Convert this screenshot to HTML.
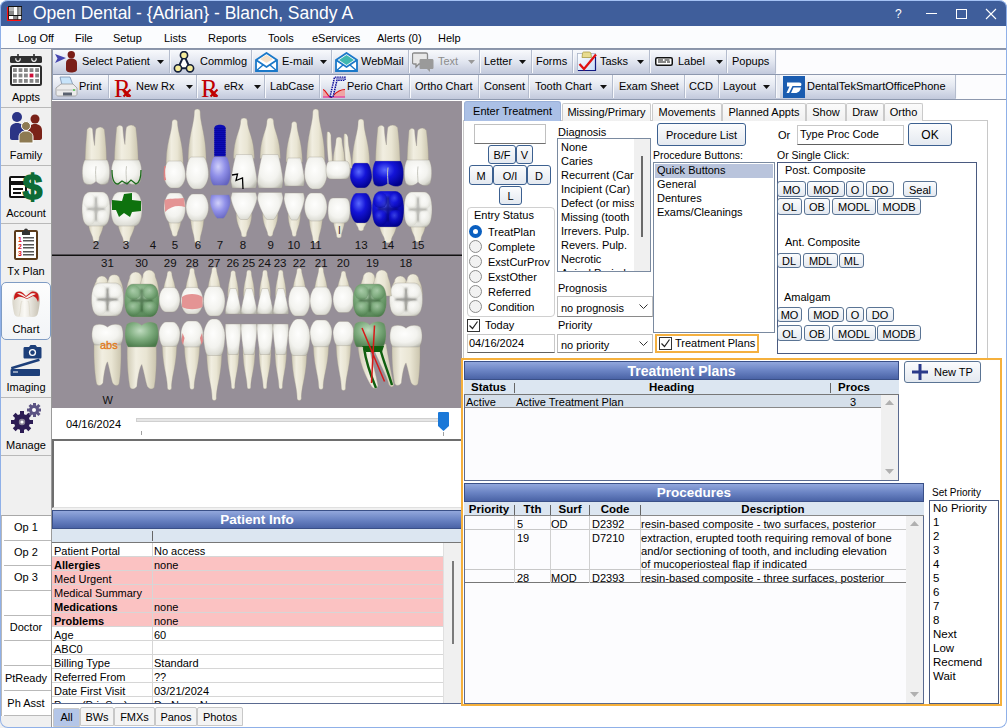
<!DOCTYPE html>
<html><head><meta charset="utf-8">
<style>
*{box-sizing:border-box;margin:0;padding:0}
html,body{width:1007px;height:728px;overflow:hidden;background:#fff}
body{position:relative;font-family:"Liberation Sans",sans-serif;font-size:11px;color:#000}
.a{position:absolute}
.t{position:absolute;white-space:nowrap;line-height:1}
#title{left:0;top:0;width:1007px;height:26px;background:#3f5e9b;border-top:1px solid #a4c2f4;border-radius:8px 8px 0 0}
#menu{left:0;top:26px;width:1007px;height:23px;background:#fbfcfe;border-bottom:1px solid #8a94a8}
.tb{height:25px;background:linear-gradient(#f8f9fc,#e4e8f1 45%,#c2c9dc);border-bottom:1px solid #8d98ae}
.sep{position:absolute;top:1px;width:1px;height:23px;background:#a9b1c4}
#side{left:0;top:49px;width:52px;height:679px;background:#f0f0f0;border-right:1px solid #9a9a9a}
.sb{position:absolute;left:1px;width:50px;height:58px;border-bottom:1px solid #b4b4b4;text-align:center}
.sbl{position:absolute;left:0;width:50px;top:41px;font-size:11px;text-align:center;line-height:12px}
#chart{left:52px;top:101px;width:410px;height:307px;background:#968f98}
.btn{position:absolute;border:1px solid #3c6090;border-radius:3px;background:linear-gradient(#fbfcfd,#e4e9f0);text-align:center;line-height:16px}
.hdr{position:absolute;height:19px;background:linear-gradient(#92a7dc,#6b84c4 50%,#4a63a6);color:#fff;font-weight:bold;font-size:13.5px;text-align:center;line-height:18px;border:1px solid #3a5088}
.colh{position:absolute;height:14px;background:#dce6f1;border-bottom:1px solid #777}
</style></head><body>

<!-- TITLE BAR -->
<div id="title" class="a"></div>


<svg class="a" style="left:7px;top:6px" width="15" height="15" viewBox="0 0 15 15">
<rect x="1" y="0" width="14" height="14" fill="#111"/>
<rect x="2" y="1" width="4.5" height="4" fill="#b8b8b8"/><rect x="6.5" y="1" width="4" height="8" fill="#fff"/><rect x="2" y="5" width="4.5" height="4" fill="#8a8a8a"/>
<rect x="11.2" y="1" width="3" height="8" fill="#a8a8a8"/>
<rect x="2" y="10" width="4.5" height="3.2" fill="#fff"/><rect x="6.5" y="10" width="4" height="3.2" fill="#8c8c8c"/><rect x="11.2" y="10" width="3" height="3.2" fill="#fff"/>
<rect x="0" y="1" width="1.2" height="14" fill="#ff1010"/><rect x="0" y="13.8" width="14" height="1.2" fill="#ff1010"/>
</svg>
<div class="t" style="left:33px;top:5px;font-size:17.5px;color:#fff">Open Dental - {Adrian} - Blanch, Sandy A</div>
<div class="t" style="left:895px;top:8px;font-size:12px;color:#fff">?</div>
<div class="a" style="left:926px;top:13px;width:11px;height:1px;background:#fff"></div>
<div class="a" style="left:956px;top:9px;width:11px;height:10px;border:1px solid #fff"></div>
<svg class="a" style="left:985px;top:8px" width="12" height="12" viewBox="0 0 12 12"><path d="M1 1L11 11M11 1L1 11" stroke="#fff" stroke-width="1.1"/></svg>

<!-- MENU -->
<div id="menu" class="a"></div>
<div class="t" style="left:18px;top:33px;font-size:11px">Log Off</div>
<div class="t" style="left:75px;top:33px;font-size:11px">File</div>
<div class="t" style="left:113px;top:33px;font-size:11px">Setup</div>
<div class="t" style="left:164px;top:33px;font-size:11px">Lists</div>
<div class="t" style="left:208px;top:33px;font-size:11px">Reports</div>
<div class="t" style="left:268px;top:33px;font-size:11px">Tools</div>
<div class="t" style="left:312px;top:33px;font-size:11px">eServices</div>
<div class="t" style="left:377px;top:33px;font-size:11px">Alerts (0)</div>
<div class="t" style="left:438px;top:33px;font-size:11px">Help</div>

<!-- SIDEBAR -->
<div id="side" class="a"></div>
<div class="a" style="left:1px;top:107px;width:50px;height:1px;background:#b9b9b9"></div>
<div class="a" style="left:1px;top:165px;width:50px;height:1px;background:#b9b9b9"></div>
<div class="a" style="left:1px;top:223px;width:50px;height:1px;background:#b9b9b9"></div>
<div class="a" style="left:1px;top:397px;width:50px;height:1px;background:#b9b9b9"></div>
<div class="a" style="left:1px;top:455px;width:50px;height:1px;background:#b9b9b9"></div>
<div class="a" style="left:1px;top:282px;width:50px;height:58px;border:1px solid #7f9cc4;border-radius:5px;background:linear-gradient(#fdfdfd,#f2f4f7)"></div>
<!-- Appts calendar -->
<svg class="a" style="left:10px;top:54px" width="32" height="32" viewBox="0 0 32 32">
<rect x="0" y="2" width="32" height="7" rx="1.5" fill="#2e2e2e"/>
<path d="M8 0v4.5M24 0v4.5" stroke="#2e2e2e" stroke-width="1.6"/>
<path d="M6 4.2a2.2 2.2 0 1 0 4 0M22 4.2a2.2 2.2 0 1 0 4 0" fill="none" stroke="#eee" stroke-width="1.2"/>
<rect x="1" y="12" width="30" height="19" rx="1.5" fill="#fff" stroke="#2e2e2e" stroke-width="2"/>
<rect x="3" y="14.2" width="3.8" height="3.8" fill="#868686"/><rect x="8.6" y="14.2" width="3.8" height="3.8" fill="#868686"/><rect x="14" y="14.2" width="3.8" height="3.8" fill="#868686"/><rect x="19.6" y="14.2" width="3.8" height="3.8" fill="#868686"/><rect x="25.2" y="14.2" width="3.8" height="3.8" fill="#868686"/><rect x="3" y="19.6" width="3.8" height="3.8" fill="#868686"/><rect x="8.6" y="19.6" width="3.8" height="3.8" fill="#868686"/><rect x="14" y="19.6" width="3.8" height="3.8" fill="#868686"/><rect x="19.6" y="19.6" width="3.8" height="3.8" fill="#d0103a"/><rect x="25.2" y="19.6" width="3.8" height="3.8" fill="#868686"/><rect x="3" y="25" width="3.8" height="3.8" fill="#868686"/><rect x="8.6" y="25" width="3.8" height="3.8" fill="#868686"/><rect x="14" y="25" width="3.8" height="3.8" fill="#868686"/><rect x="19.6" y="25" width="3.8" height="3.8" fill="#868686"/><rect x="25.2" y="25" width="3.8" height="3.8" fill="#868686"/>
</svg>
<div class="t" style="left:0;width:52px;text-align:center;top:92px;font-size:11px">Appts</div>
<!-- Family -->
<svg class="a" style="left:10px;top:112px" width="32" height="32" viewBox="0 0 32 32">
<circle cx="7" cy="5" r="5" fill="#2b3485"/><path d="M0 18c0-5 3-7 7-7s7 2 7 7v10H2c-1 0-2-1-2-2z" fill="#2b3485"/>
<circle cx="25" cy="7" r="4.5" fill="#7a2218"/><path d="M18 19c0-5 3-7 7-7s7 2 7 7v7c0 1-1 2-2 2h-12z" fill="#7a2218"/>
<circle cx="16" cy="14" r="4.5" fill="#8d7a52" stroke="#fff" stroke-width="1"/><path d="M9 25c0-4 3-6 7-6s7 2 7 6v6H9z" fill="#8d7a52" stroke="#fff" stroke-width="1"/>
</svg>
<div class="t" style="left:0;width:52px;text-align:center;top:150px;font-size:11px">Family</div>
<!-- Account -->
<svg class="a" style="left:9px;top:170px" width="34" height="32" viewBox="0 0 34 32">
<rect x="1" y="7" width="16" height="20" rx="1" fill="#fff" stroke="#111" stroke-width="2"/>
<rect x="1" y="11" width="16" height="4" fill="#111"/><rect x="4" y="18" width="10" height="2" fill="#111"/><rect x="4" y="22" width="8" height="2" fill="#111"/>
<text x="23.5" y="29" font-family="Liberation Sans" font-weight="bold" font-size="35" fill="#0d6b35" stroke="#0d6b35" stroke-width="1.6" text-anchor="middle">$</text>
</svg>
<div class="t" style="left:0;width:52px;text-align:center;top:208px;font-size:11px">Account</div>
<!-- Tx Plan -->
<svg class="a" style="left:14px;top:228px" width="24" height="32" viewBox="0 0 24 32">
<rect x="1" y="3" width="22" height="28" rx="1" fill="#fff" stroke="#5a3a1a" stroke-width="2"/>
<path d="M8 3h8v4H8z" fill="#333"/><circle cx="12" cy="2.5" r="2" fill="#333"/>
<g fill="#e01010" font-family="Liberation Sans" font-weight="bold" font-size="7"><text x="4" y="14">1</text><text x="4" y="21">2</text><text x="4" y="28">3</text></g>
<g fill="#555"><rect x="9" y="9" width="11" height="1.5"/><rect x="9" y="12" width="11" height="1.5"/><rect x="9" y="16" width="11" height="1.5"/><rect x="9" y="19" width="11" height="1.5"/><rect x="9" y="23" width="11" height="1.5"/><rect x="9" y="26" width="11" height="1.5"/></g>
</svg>
<div class="t" style="left:0;width:52px;text-align:center;top:266px;font-size:11px">Tx Plan</div>
<!-- Chart tooth -->
<svg class="a" style="left:11px;top:289px" width="30" height="29" viewBox="0 0 30 29">
<defs><linearGradient id="tg" x1="0" x2="1"><stop offset="0" stop-color="#d8d4c8"/><stop offset="0.45" stop-color="#fbfaf6"/><stop offset="1" stop-color="#c6c0b2"/></linearGradient></defs>
<path d="M3 5C5 1 10 1 13 3C16 1 22 0 26 3C30 7 29 13 28 19C27 24 27 28 22 28H8C3 28 3 24 2 19C1 13 1 9 3 5z" fill="url(#tg)"/>
<path d="M8 27C10 22 9 15 11 12M19 27C18 22 19 15 17 12" stroke="#e0dccf" stroke-width="1" fill="none"/>
<path d="M4 5C6 2 9 2 12 4L15 7L20 3C23 2 26 3 27 5C28 8 28 11 27 13C26 10 25 8 22 7L16 10C13 9 10 7 7 8C5 9 4 10 3 11C3 9 3 7 4 5z" fill="#c81818"/>
<path d="M6 4.5C8 3.5 10 4 12 5.5L15 8L20 4.5C22 4 24 4 25 5C23 6 21 6.5 16 9.5C13 8 10 6 6 4.5z" fill="#f4f0ec"/>
</svg>
<div class="t" style="left:0;width:52px;text-align:center;top:324px;font-size:11px">Chart</div>
<!-- Imaging -->
<svg class="a" style="left:10px;top:344px" width="32" height="33" viewBox="0 0 32 33">
<path d="M15 3h4l1.5-2h5L27 3h3c1 0 1.5.5 1.5 1.5V13c0 1-.5 1.5-1.5 1.5H15c-1 0-1.5-.5-1.5-1.5V4.5C13.5 3.5 14 3 15 3z" fill="#1d3f7a"/>
<circle cx="22.5" cy="8.5" r="3.6" fill="#fff"/><circle cx="22.5" cy="8.5" r="2.2" fill="#1d3f7a"/>
<path d="M1 23L29 14.5l.8 2.6L1.5 25.5z" fill="#1d3f7a"/>
<path d="M2 25h27c.5 0 1 .5 1 1v5c0 .5-.5 1-1 1H1.5c-.5 0-1-.5-1-1v-5c0-.5.5-1 1.5-1z" fill="#1d3f7a"/>
<path d="M3 28h5" stroke="#fff" stroke-width="1"/>
</svg>
<div class="t" style="left:0;width:52px;text-align:center;top:382px;font-size:11px">Imaging</div>
<!-- Manage -->
<svg class="a" style="left:10px;top:402px" width="32" height="32" viewBox="0 0 32 32">
<g fill="#2c1c54"><circle cx="12" cy="20" r="8"/>
<rect x="10" y="9" width="4" height="22"/><rect x="1" y="18" width="22" height="4"/>
<rect x="10" y="9" width="4" height="22" transform="rotate(45 12 20)"/><rect x="10" y="9" width="4" height="22" transform="rotate(-45 12 20)"/></g>
<circle cx="12" cy="20" r="3.2" fill="#8a8498"/><circle cx="12" cy="20" r="1.6" fill="#fff"/>
<g fill="#5c5484"><circle cx="24" cy="8" r="5"/>
<rect x="23" y="1" width="3" height="14"/><rect x="17" y="6.5" width="14" height="3"/>
<rect x="23" y="1" width="3" height="14" transform="rotate(45 24.5 8)"/><rect x="23" y="1" width="3" height="14" transform="rotate(-45 24.5 8)"/></g>
<circle cx="24" cy="8" r="2" fill="#fff"/>
</svg>
<div class="t" style="left:0;width:52px;text-align:center;top:440px;font-size:11px">Manage</div>
<!-- Op list -->
<div class="a" style="left:1px;top:515px;width:50px;height:201px;background:#fff;border-top:1px solid #a8a8a8;border-left:1px solid #b8b8b8"></div>
<div class="a" style="left:4px;top:540px;width:47px;height:1px;background:#b9b9b9"></div>
<div class="a" style="left:4px;top:565px;width:47px;height:1px;background:#b9b9b9"></div>
<div class="a" style="left:4px;top:590px;width:47px;height:1px;background:#b9b9b9"></div>
<div class="a" style="left:4px;top:615px;width:47px;height:1px;background:#b9b9b9"></div>
<div class="a" style="left:4px;top:640px;width:47px;height:1px;background:#b9b9b9"></div>
<div class="a" style="left:4px;top:665px;width:47px;height:1px;background:#b9b9b9"></div>
<div class="a" style="left:4px;top:690px;width:47px;height:1px;background:#b9b9b9"></div>
<div class="a" style="left:4px;top:715px;width:47px;height:1px;background:#b9b9b9"></div>
<div class="t" style="left:1px;width:50px;text-align:center;top:522px;font-size:11px">Op 1</div>
<div class="t" style="left:1px;width:50px;text-align:center;top:547px;font-size:11px">Op 2</div>
<div class="t" style="left:1px;width:50px;text-align:center;top:572px;font-size:11px">Op 3</div>
<div class="t" style="left:1px;width:50px;text-align:center;top:622px;font-size:11px">Doctor</div>
<div class="t" style="left:1px;width:50px;text-align:center;top:673px;font-size:11px">PtReady</div>
<div class="t" style="left:1px;width:50px;text-align:center;top:698px;font-size:11px">Ph Asst</div>

<!-- TOOLBAR -->
<div class="a tb" style="left:52px;top:49px;width:955px;border-top:1px solid #8d98ae;height:26px"></div>
<div class="a tb" style="left:52px;top:75px;width:955px;height:25px"></div>
<div class="a" style="left:776px;top:50px;width:231px;height:24px;background:#fcfcfe"></div>
<div class="a" style="left:956px;top:75px;width:51px;height:24px;background:#fcfcfe"></div>
<div class="a" style="left:52px;top:100px;width:955px;height:1px;background:#fff"></div>
<div class="a" style="left:52px;top:49px;width:1px;height:50px;background:#8d98ae"></div>
<!-- row1 -->
<svg class="a" style="left:55px;top:51px" width="23" height="22" viewBox="0 0 23 22">
<path d="M0 3L11 7L0 12L2.5 7.5z" fill="#4646b0"/><circle cx="16.3" cy="3.8" r="3.7" fill="#7a1e18"/><path d="M11 12c0-3 2-4.5 5.3-4.5s5.7 1.5 5.7 4.5v6.5c0 2-2.5 3-5.7 3s-5.3-1-5.3-3z" fill="#7a1e18"/></svg>
<div class="t" style="left:82px;top:56px">Select Patient</div><svg class="a" style="left:157px;top:60px" width="7" height="4"><path d="M0 0h7L3.5 4z" fill="#111"/></svg><div class="a" style="left:169px;top:50px;width:1px;height:23px;background:#b4bccd;box-shadow:1px 0 0 #f8f9fc"></div>
<svg class="a" style="left:173px;top:51px" width="22" height="22" viewBox="0 0 22 22">
<path d="M11 4.2L5 17.3h12z" fill="#fff" stroke="#15203a" stroke-width="2"/>
<circle cx="11" cy="4.2" r="3.6" fill="#f6ec9c" stroke="#15203a" stroke-width="1.6"/><circle cx="5" cy="17.3" r="3.6" fill="#f6ec9c" stroke="#15203a" stroke-width="1.6"/><circle cx="17" cy="17.3" r="3.6" fill="#f6ec9c" stroke="#15203a" stroke-width="1.6"/></svg>
<div class="t" style="left:200px;top:56px">Commlog</div><div class="a" style="left:251px;top:50px;width:1px;height:23px;background:#b4bccd;box-shadow:1px 0 0 #f8f9fc"></div>
<svg class="a" style="left:255px;top:52px" width="23" height="20" viewBox="0 0 23 20">
<path d="M1 8L11.5 1 22 8v11H1z" fill="#fff" stroke="#1a78c8" stroke-width="1.8"/><path d="M1 8l10.5 7L22 8" fill="none" stroke="#1a78c8" stroke-width="1.8"/><path d="M1 19l7-6M22 19l-7-6" stroke="#1a78c8" stroke-width="1.5"/><path d="M5 7l6.5-4 6.5 4-6.5 4z" fill="#f4e0c8"/></svg>
<div class="t" style="left:282px;top:56px">E-mail</div><svg class="a" style="left:320px;top:60px" width="7" height="4"><path d="M0 0h7L3.5 4z" fill="#111"/></svg><div class="a" style="left:331px;top:50px;width:1px;height:23px;background:#b4bccd;box-shadow:1px 0 0 #f8f9fc"></div>
<svg class="a" style="left:335px;top:52px" width="23" height="20" viewBox="0 0 23 20">
<path d="M1 8L11.5 1 22 8v11H1z" fill="#fff" stroke="#1a78c8" stroke-width="1.8"/><path d="M4 8l7.5-5 7.5 5-7.5 5z" fill="#40b8b0"/><path d="M1 8l10.5 7L22 8" fill="none" stroke="#1a78c8" stroke-width="1.8"/><path d="M1 19l7-6M22 19l-7-6" stroke="#1a78c8" stroke-width="1.5"/></svg>
<div class="t" style="left:361px;top:56px">WebMail</div><div class="a" style="left:408px;top:50px;width:1px;height:23px;background:#b4bccd;box-shadow:1px 0 0 #f8f9fc"></div>
<svg class="a" style="left:412px;top:52px" width="22" height="21" viewBox="0 0 22 21">
<path d="M2 1h12c1 0 1.5.5 1.5 1.5v8c0 1-.5 1.5-1.5 1.5H7l-3 3v-3H2c-1 0-1.5-.5-1.5-1.5v-8C.5 1.5 1 1 2 1z" fill="#e8e8e8" stroke="#8a8a8a" stroke-width="1.3"/>
<path d="M9 7h11c1 0 1.5.5 1.5 1.5v7c0 1-.5 1.5-1.5 1.5h-2v3l-3-3H9c-1 0-1.5-.5-1.5-1.5v-7C7.5 7.5 8 7 9 7z" fill="#9a9a9a"/></svg>
<div class="t" style="left:438px;top:56px;color:#8c8c8c">Text</div><svg class="a" style="left:468px;top:60px" width="7" height="4"><path d="M0 0h7L3.5 4z" fill="#999"/></svg><div class="a" style="left:479px;top:50px;width:1px;height:23px;background:#b4bccd;box-shadow:1px 0 0 #f8f9fc"></div>
<div class="t" style="left:484px;top:56px">Letter</div><svg class="a" style="left:519px;top:60px" width="7" height="4"><path d="M0 0h7L3.5 4z" fill="#111"/></svg><div class="a" style="left:531px;top:50px;width:1px;height:23px;background:#b4bccd;box-shadow:1px 0 0 #f8f9fc"></div>
<div class="t" style="left:536px;top:56px">Forms</div><div class="a" style="left:572px;top:50px;width:1px;height:23px;background:#b4bccd;box-shadow:1px 0 0 #f8f9fc"></div>
<svg class="a" style="left:577px;top:51px" width="21" height="22" viewBox="0 0 21 22">
<defs><linearGradient id="tkg" x1="0" y1="0" x2="1" y2="1"><stop offset="0" stop-color="#fff"/><stop offset="1" stop-color="#c8dcf8"/></linearGradient></defs>
<rect x="0.5" y="2.5" width="18" height="17" fill="url(#tkg)" stroke="#a8b4c8" stroke-width="0.8"/>
<path d="M18.5 6V19.5H1" fill="none" stroke="#101880" stroke-width="1.2"/>
<path d="M5.5 2.5C5.5 1 6.5 1 7.5 1H12C13 1 14 1.5 14 3L14.5 6.5H5z" fill="#e8dc90" stroke="#a09030" stroke-width="0.7"/>
<path d="M2.5 13L7 18L19 3.5" fill="none" stroke="#e01010" stroke-width="2.3"/>
</svg>
<div class="t" style="left:600px;top:56px">Tasks</div><svg class="a" style="left:637px;top:60px" width="7" height="4"><path d="M0 0h7L3.5 4z" fill="#111"/></svg><div class="a" style="left:649px;top:50px;width:1px;height:23px;background:#b4bccd;box-shadow:1px 0 0 #f8f9fc"></div>
<svg class="a" style="left:655px;top:57px" width="18" height="9" viewBox="0 0 18 9">
<rect x="0.75" y="0.75" width="16.5" height="7.5" rx="1.5" fill="#fff" stroke="#111" stroke-width="1.5"/><path d="M3 3h5M3 5h8M9.5 3h5M12 5h3" stroke="#111" stroke-width="1"/></svg>
<div class="t" style="left:678px;top:56px">Label</div><svg class="a" style="left:716px;top:60px" width="7" height="4"><path d="M0 0h7L3.5 4z" fill="#111"/></svg><div class="a" style="left:726px;top:50px;width:1px;height:23px;background:#b4bccd;box-shadow:1px 0 0 #f8f9fc"></div>
<div class="t" style="left:732px;top:56px">Popups</div><div class="a" style="left:775px;top:50px;width:1px;height:23px;background:#b4bccd;box-shadow:1px 0 0 #f8f9fc"></div>
<!-- row2 -->
<svg class="a" style="left:55px;top:76px" width="23" height="22" viewBox="0 0 23 22">
<path d="M5 1h10l3 8H7z" fill="#c8e4fa" stroke="#7890b0" stroke-width="0.8"/>
<path d="M1 12l5-4h12l4 4v6c0 1-1 2-2 2H3c-1 0-2-1-2-2z" fill="#ececec" stroke="#9a9a9a" stroke-width="0.8"/>
<path d="M2 13h19v2H2z" fill="#d4d4d4"/><rect x="8" y="16.5" width="9" height="3" fill="#5a6270"/><circle cx="19" cy="14" r="0.9" fill="#40c040"/></svg>
<div class="t" style="left:79px;top:81px">Print</div><div class="a" style="left:108px;top:75px;width:1px;height:23px;background:#b4bccd;box-shadow:1px 0 0 #f8f9fc"></div>
<div class="t" style="left:114px;top:76px;font-family:'Liberation Serif';font-size:25px;color:#c00000">R</div>
<svg class="a" style="left:122px;top:88px" width="10" height="10"><path d="M1.5 1.5l7 7M8.5 1.5l-7 7" stroke="#c00000" stroke-width="2"/></svg>
<div class="t" style="left:136px;top:81px">New Rx</div><svg class="a" style="left:186px;top:85px" width="7" height="4"><path d="M0 0h7L3.5 4z" fill="#111"/></svg><div class="a" style="left:196px;top:75px;width:1px;height:23px;background:#b4bccd;box-shadow:1px 0 0 #f8f9fc"></div>
<div class="t" style="left:201px;top:76px;font-family:'Liberation Serif';font-size:25px;color:#c00000">R</div>
<svg class="a" style="left:209px;top:88px" width="10" height="10"><path d="M1.5 1.5l7 7M8.5 1.5l-7 7" stroke="#c00000" stroke-width="2"/></svg>
<div class="t" style="left:224px;top:81px">eRx</div><svg class="a" style="left:254px;top:85px" width="7" height="4"><path d="M0 0h7L3.5 4z" fill="#111"/></svg><div class="a" style="left:264px;top:75px;width:1px;height:23px;background:#b4bccd;box-shadow:1px 0 0 #f8f9fc"></div>
<div class="t" style="left:270px;top:81px">LabCase</div><div class="a" style="left:319px;top:75px;width:1px;height:23px;background:#b4bccd;box-shadow:1px 0 0 #f8f9fc"></div>
<svg class="a" style="left:323px;top:76px" width="23" height="22" viewBox="0 0 23 22">
<path d="M0 13.5C3 14 5 21 7.5 21.5C10 21 13 13.5 22 13.5V21.5H0z" fill="#f0a4a4"/>
<path d="M0 13.5C3 14 5 21 7.5 21.5C10 21 13 13.5 22 13.5" fill="none" stroke="#e01010" stroke-width="1.2"/>
<path d="M0 21h22" stroke="#e020a0" stroke-width="1"/>
<path d="M7 21L11.5 1.2H22V4.2H14L10 21z" fill="#e8e8f8" stroke="#0c0c98" stroke-width="1.5" stroke-dasharray="1.5 0.8"/>
<path d="M12 1.5H21.5V4H14z" fill="#9090d0"/>
</svg>
<div class="t" style="left:347px;top:81px">Perio Chart</div><div class="a" style="left:409px;top:75px;width:1px;height:23px;background:#b4bccd;box-shadow:1px 0 0 #f8f9fc"></div>
<div class="t" style="left:415px;top:81px">Ortho Chart</div><div class="a" style="left:478px;top:75px;width:1px;height:23px;background:#b4bccd;box-shadow:1px 0 0 #f8f9fc"></div>
<div class="t" style="left:484px;top:81px">Consent</div><div class="a" style="left:528px;top:75px;width:1px;height:23px;background:#b4bccd;box-shadow:1px 0 0 #f8f9fc"></div>
<div class="t" style="left:535px;top:81px">Tooth Chart</div><svg class="a" style="left:600px;top:85px" width="7" height="4"><path d="M0 0h7L3.5 4z" fill="#111"/></svg><div class="a" style="left:612px;top:75px;width:1px;height:23px;background:#b4bccd;box-shadow:1px 0 0 #f8f9fc"></div>
<div class="t" style="left:619px;top:81px">Exam Sheet</div><div class="a" style="left:684px;top:75px;width:1px;height:23px;background:#b4bccd;box-shadow:1px 0 0 #f8f9fc"></div>
<div class="t" style="left:689px;top:81px">CCD</div><div class="a" style="left:718px;top:75px;width:1px;height:23px;background:#b4bccd;box-shadow:1px 0 0 #f8f9fc"></div>
<div class="t" style="left:723px;top:81px">Layout</div><svg class="a" style="left:763px;top:85px" width="7" height="4"><path d="M0 0h7L3.5 4z" fill="#111"/></svg><div class="a" style="left:775px;top:75px;width:1px;height:23px;background:#b4bccd;box-shadow:1px 0 0 #f8f9fc"></div>
<div class="a" style="left:777px;top:75px;width:3px;height:23px;background:#e8ebf2"></div>
<svg class="a" style="left:783px;top:76px" width="22" height="22" viewBox="0 0 22 22">
<rect width="22" height="22" fill="#1a5cb0"/><path d="M4 6.5h12c2.5 0 3 1.5 2 3.5H9.5L6 17H3.5l3-6.5H4z" fill="#fff"/><path d="M10.5 11.5h7.5c-.5 3-2.5 5.5-6 5.5H8z" fill="#fff"/></svg>
<div class="t" style="left:807px;top:81px">DentalTekSmartOfficePhone</div><div class="a" style="left:955px;top:75px;width:1px;height:23px;background:#b4bccd;box-shadow:1px 0 0 #f8f9fc"></div>

<!-- CHART -->
<div id="chart" class="a"></div>
<!-- TEETH --><svg class="a" style="left:52px;top:101px" width="410" height="307" viewBox="52 101 410 307"><defs>
<linearGradient id="rg" x1="0" x2="1"><stop offset="0" stop-color="#d0cbb5"/><stop offset="0.3" stop-color="#f1eee1"/><stop offset="0.65" stop-color="#e9e5d3"/><stop offset="1" stop-color="#cbc5ae"/></linearGradient>
<radialGradient id="cg" cx="0.45" cy="0.4" r="0.7"><stop offset="0" stop-color="#fefefd"/><stop offset="0.55" stop-color="#f3f3ef"/><stop offset="0.85" stop-color="#dcdcd4"/><stop offset="1" stop-color="#b8b8ae"/></radialGradient>
<radialGradient id="bg" cx="0.4" cy="0.35" r="0.7"><stop offset="0" stop-color="#5a6aff"/><stop offset="0.45" stop-color="#1414d8"/><stop offset="1" stop-color="#00008a"/></radialGradient>
<radialGradient id="lp" cx="0.4" cy="0.35" r="0.7"><stop offset="0" stop-color="#d0d0fa"/><stop offset="0.5" stop-color="#9090e8"/><stop offset="1" stop-color="#6464c0"/></radialGradient>
<filter id="bl" x="-20%" y="-20%" width="140%" height="140%"><feGaussianBlur stdDeviation="0.9"/></filter>
<radialGradient id="gg" cx="0.45" cy="0.35" r="0.7"><stop offset="0" stop-color="#c0dcc0"/><stop offset="0.5" stop-color="#7eac7e"/><stop offset="1" stop-color="#4a7a4a"/></radialGradient>
</defs><path d="M85.1 164.0 C85.4 145.5 86.5 138.1 87.0 129.5 Q89.8 125.5 92.6 129.0 C92.9 134.4 93.8 141.8 94.6 145.5 C94.9 138.1 95.4 130.7 96.0 129.0 Q100.5 125.0 104.4 129.5 C105.2 138.1 106.4 145.5 106.6 164.0 Z" fill="url(#rg)" stroke="#9c988c" stroke-width="0.35"/>
<path d="M84.8 160.0 H107.2 C110.0 165.0 110.5 175.0 108.3 182.0 C105.8 186.0 98.8 185.0 96.0 181.2 C93.2 185.0 86.2 186.0 83.7 182.0 C81.5 175.0 82.0 165.0 84.8 160.0 Z" fill="url(#cg)" stroke="#9c988c" stroke-width="0.35"/>
<path d="M96.0 166.2 C95.0 172.5 96.0 177.5 96.0 181.2" stroke="#c8c8c0" stroke-width="1" fill="none"/>
<path d="M88.2 220.0 C88.2 231.0 92.9 235.4 92.9 238.9 A3.1 3.1 0 0 0 99.1 238.9 C99.1 235.4 103.8 231.0 103.8 220.0 Z" fill="url(#rg)" stroke="#9c988c" stroke-width="0.35"/>
<path d="M89.7 192.0 L102.3 192.0 C107.1 192.0 110.0 198.5 110.0 209.0 C110.0 219.5 107.3 226.0 103.0 226.0 L89.0 226.0 C84.7 226.0 82.0 219.5 82.0 209.0 C82.0 198.5 84.9 192.0 89.7 192.0 Z" fill="url(#cg)" stroke="#9c988c" stroke-width="0.35"/>
<path d="M114.4 164.0 C114.7 144.5 116.0 136.7 116.6 127.5 Q119.7 123.5 122.8 127.0 C123.1 132.8 124.0 140.6 125.0 144.5 C125.3 136.7 125.9 128.9 126.5 127.0 Q131.5 123.0 135.8 127.5 C136.7 136.7 138.0 144.5 138.3 164.0 Z" fill="url(#rg)" stroke="#9c988c" stroke-width="0.35"/>
<path d="M114.1 160.0 H138.9 C142.0 165.0 142.5 175.0 140.1 182.0 C137.3 186.0 129.6 185.0 126.5 181.2 C123.4 185.0 115.7 186.0 112.9 182.0 C110.5 175.0 111.0 165.0 114.1 160.0 Z" fill="url(#cg)" stroke="#9c988c" stroke-width="0.35"/>
<path d="M126.5 166.2 C125.5 172.5 126.5 177.5 126.5 181.2" stroke="#c8c8c0" stroke-width="1" fill="none"/>
<path d="M117.8 220.0 C117.8 231.5 123.1 236.1 123.1 239.6 A3.4 3.4 0 0 0 129.9 239.6 C129.9 236.1 135.2 231.5 135.2 220.0 Z" fill="url(#rg)" stroke="#9c988c" stroke-width="0.35"/>
<path d="M119.5 192.0 L133.5 192.0 C138.8 192.0 142.0 198.5 142.0 209.0 C142.0 219.5 139.1 226.0 134.2 226.0 L118.8 226.0 C113.9 226.0 111.0 219.5 111.0 209.0 C111.0 198.5 114.2 192.0 119.5 192.0 Z" fill="url(#cg)" stroke="#9c988c" stroke-width="0.35"/>
<path d="M166.2 165.0 C166.2 142.0 172.0 132.8 172.0 121.8 A2.8 2.8 0 0 1 177.5 121.8 C177.5 132.8 183.3 142.0 183.3 165.0 Z" fill="url(#rg)" stroke="#9c988c" stroke-width="0.35"/>
<path d="M168.8 161.0 L180.7 161.0 C182.8 161.0 185.5 169.2 185.5 175.8 C185.5 181.3 181.4 188.0 178.0 188.0 L171.5 188.0 C168.1 188.0 164.0 181.3 164.0 175.8 C164.0 169.2 166.7 161.0 168.8 161.0 Z" fill="url(#cg)" stroke="#9c988c" stroke-width="0.35"/>
<path d="M168.3 217.0 C168.3 227.0 172.1 231.0 172.1 234.3 A2.7 2.7 0 0 0 177.4 234.3 C177.4 231.0 181.2 227.0 181.2 217.0 Z" fill="url(#rg)" stroke="#9c988c" stroke-width="0.35"/>
<path d="M170.4 193.0 L179.1 193.0 C182.3 193.0 185.5 200.5 185.5 208.0 C185.5 215.5 182.0 223.0 178.5 223.0 L171.0 223.0 C167.5 223.0 164.0 215.5 164.0 208.0 C164.0 200.5 167.2 193.0 170.4 193.0 Z" fill="url(#cg)" stroke="#9c988c" stroke-width="0.35"/>
<path d="M188.2 161.0 C188.2 135.0 194.3 124.6 194.3 111.9 A2.9 2.9 0 0 1 200.2 111.9 C200.2 124.6 206.2 135.0 206.2 161.0 Z" fill="url(#rg)" stroke="#9c988c" stroke-width="0.35"/>
<path d="M191.1 157.0 L203.4 157.0 C205.7 157.0 208.5 166.7 208.5 174.6 C208.5 181.1 204.2 189.0 200.6 189.0 L193.9 189.0 C190.3 189.0 186.0 181.1 186.0 174.6 C186.0 166.7 188.8 157.0 191.1 157.0 Z" fill="url(#cg)" stroke="#9c988c" stroke-width="0.35"/>
<path d="M190.5 215.0 C190.5 229.0 194.4 234.6 194.4 240.2 A2.8 2.8 0 0 0 200.1 240.2 C200.1 234.6 204.0 229.0 204.0 215.0 Z" fill="url(#rg)" stroke="#9c988c" stroke-width="0.35"/>
<path d="M192.8 194.0 L201.8 194.0 C205.1 194.0 208.5 200.8 208.5 207.5 C208.5 214.2 204.8 221.0 201.2 221.0 L193.3 221.0 C189.7 221.0 186.0 214.2 186.0 207.5 C186.0 200.8 189.4 194.0 192.8 194.0 Z" fill="url(#cg)" stroke="#9c988c" stroke-width="0.35"/>
<path d="M233.6 158.5 C233.6 138.2 240.6 130.2 240.6 121.4 A3.4 3.4 0 0 1 247.4 121.4 C247.4 130.2 254.4 138.2 254.4 158.5 Z" fill="url(#rg)" stroke="#9c988c" stroke-width="0.35"/>
<path d="M236.2 154.5 L251.8 154.5 C252.7 154.5 257.0 176.5 257.0 181.3 C257.0 182.5 255.9 188.0 255.7 188.0 L232.3 188.0 C232.1 188.0 231.0 182.5 231.0 181.3 C231.0 176.5 235.3 154.5 236.2 154.5 Z" fill="url(#cg)" stroke="#9c988c" stroke-width="0.35"/>
<path d="M236.2 213.5 C236.2 225.2 241.4 229.9 241.4 234.4 A2.6 2.6 0 0 0 246.6 234.4 C246.6 229.9 251.8 225.2 251.8 213.5 Z" fill="url(#rg)" stroke="#9c988c" stroke-width="0.35"/>
<path d="M232.3 192.5 L255.7 192.5 C256.0 192.5 257.0 196.7 257.0 197.9 C257.0 202.7 249.4 219.5 247.2 219.5 L240.8 219.5 C238.6 219.5 231.0 202.7 231.0 197.9 C231.0 196.7 232.0 192.5 232.3 192.5 Z" fill="url(#cg)" stroke="#9c988c" stroke-width="0.35"/>
<path d="M260.1 158.5 C260.1 138.2 266.9 130.2 266.9 121.3 A3.3 3.3 0 0 1 273.6 121.3 C273.6 130.2 280.4 138.2 280.4 158.5 Z" fill="url(#rg)" stroke="#9c988c" stroke-width="0.35"/>
<path d="M262.6 154.5 L277.9 154.5 C278.8 154.5 283.0 176.5 283.0 181.3 C283.0 182.5 282.0 188.0 281.7 188.0 L258.8 188.0 C258.5 188.0 257.5 182.5 257.5 181.3 C257.5 176.5 261.7 154.5 262.6 154.5 Z" fill="url(#cg)" stroke="#9c988c" stroke-width="0.35"/>
<path d="M262.6 213.5 C262.6 225.2 267.7 229.9 267.7 234.4 A2.6 2.6 0 0 0 272.8 234.4 C272.8 229.9 277.9 225.2 277.9 213.5 Z" fill="url(#rg)" stroke="#9c988c" stroke-width="0.35"/>
<path d="M258.8 192.5 L281.7 192.5 C282.0 192.5 283.0 196.7 283.0 197.9 C283.0 202.7 275.5 219.5 273.4 219.5 L267.1 219.5 C265.0 219.5 257.5 202.7 257.5 197.9 C257.5 196.7 258.5 192.5 258.8 192.5 Z" fill="url(#cg)" stroke="#9c988c" stroke-width="0.35"/>
<path d="M286.1 162.0 C286.1 141.5 291.6 133.3 291.6 123.7 A2.7 2.7 0 0 1 296.9 123.7 C296.9 133.3 302.4 141.5 302.4 162.0 Z" fill="url(#rg)" stroke="#9c988c" stroke-width="0.35"/>
<path d="M288.1 158.0 L300.4 158.0 C301.1 158.0 304.5 176.4 304.5 180.4 C304.5 181.4 303.7 186.0 303.5 186.0 L285.0 186.0 C284.8 186.0 284.0 181.4 284.0 180.4 C284.0 176.4 287.4 158.0 288.1 158.0 Z" fill="url(#cg)" stroke="#9c988c" stroke-width="0.35"/>
<path d="M288.1 214.0 C288.1 225.5 292.2 230.1 292.2 234.9 A2.1 2.1 0 0 0 296.3 234.9 C296.3 230.1 300.4 225.5 300.4 214.0 Z" fill="url(#rg)" stroke="#9c988c" stroke-width="0.35"/>
<path d="M285.0 193.0 L303.5 193.0 C303.7 193.0 304.5 197.2 304.5 198.4 C304.5 203.2 298.5 220.0 296.8 220.0 L291.7 220.0 C290.0 220.0 284.0 203.2 284.0 198.4 C284.0 197.2 284.8 193.0 285.0 193.0 Z" fill="url(#cg)" stroke="#9c988c" stroke-width="0.35"/>
<path d="M306.8 161.0 C306.8 135.0 312.8 124.6 312.8 111.9 A2.9 2.9 0 0 1 318.7 111.9 C318.7 124.6 324.8 135.0 324.8 161.0 Z" fill="url(#rg)" stroke="#9c988c" stroke-width="0.35"/>
<path d="M309.6 157.0 L321.9 157.0 C324.2 157.0 327.0 166.7 327.0 174.6 C327.0 181.1 322.7 189.0 319.1 189.0 L312.4 189.0 C308.8 189.0 304.5 181.1 304.5 174.6 C304.5 166.7 307.3 157.0 309.6 157.0 Z" fill="url(#cg)" stroke="#9c988c" stroke-width="0.35"/>
<path d="M309.0 215.0 C309.0 229.0 312.9 234.6 312.9 240.2 A2.8 2.8 0 0 0 318.6 240.2 C318.6 234.6 322.5 229.0 322.5 215.0 Z" fill="url(#rg)" stroke="#9c988c" stroke-width="0.35"/>
<path d="M311.2 193.0 L320.2 193.0 C323.6 193.0 327.0 200.0 327.0 207.0 C327.0 214.0 323.3 221.0 319.7 221.0 L311.8 221.0 C308.2 221.0 304.5 214.0 304.5 207.0 C304.5 200.0 307.9 193.0 311.2 193.0 Z" fill="url(#cg)" stroke="#9c988c" stroke-width="0.35"/>
<path d="M407.1 164.0 C407.4 146.0 408.5 138.8 409.0 130.5 Q411.8 126.5 414.6 130.0 C414.9 135.2 415.8 142.4 416.6 146.0 C416.9 138.8 417.4 131.6 418.0 130.0 Q422.5 126.0 426.4 130.5 C427.2 138.8 428.4 146.0 428.6 164.0 Z" fill="url(#rg)" stroke="#9c988c" stroke-width="0.35"/>
<path d="M406.8 160.0 H429.2 C432.0 165.2 432.5 175.6 430.3 182.9 C427.8 187.0 420.8 186.0 418.0 182.1 C415.2 186.0 408.2 187.0 405.7 182.9 C403.5 175.6 404.0 165.2 406.8 160.0 Z" fill="url(#cg)" stroke="#9c988c" stroke-width="0.35"/>
<path d="M418.0 166.5 C417.0 173.0 418.0 178.2 418.0 182.1" stroke="#c8c8c0" stroke-width="1" fill="none"/>
<path d="M410.2 221.0 C410.2 231.5 414.9 235.7 414.9 238.9 A3.1 3.1 0 0 0 421.1 238.9 C421.1 235.7 425.8 231.5 425.8 221.0 Z" fill="url(#rg)" stroke="#9c988c" stroke-width="0.35"/>
<path d="M411.7 192.0 L424.3 192.0 C429.1 192.0 432.0 198.7 432.0 209.5 C432.0 220.3 429.3 227.0 425.0 227.0 L411.0 227.0 C406.7 227.0 404.0 220.3 404.0 209.5 C404.0 198.7 406.9 192.0 411.7 192.0 Z" fill="url(#cg)" stroke="#9c988c" stroke-width="0.35"/>
<path d="M352.2 167.0 C352.2 143.0 358.1 133.4 358.1 121.9 A2.9 2.9 0 0 1 363.9 121.9 C363.9 133.4 369.8 143.0 369.8 167.0 Z" fill="url(#rg)" stroke="#9c988c" stroke-width="0.35"/>
<path d="M354.9 163.0 L367.1 163.0 C369.3 163.0 372.0 170.6 372.0 176.8 C372.0 181.8 367.8 188.0 364.3 188.0 L357.7 188.0 C354.2 188.0 350.0 181.8 350.0 176.8 C350.0 170.6 352.7 163.0 354.9 163.0 Z" fill="url(#bg)" stroke="#9c988c" stroke-width="0.35"/>
<path d="M354.4 217.0 C354.4 224.0 358.2 226.8 358.2 228.2 A2.8 2.8 0 0 0 363.8 228.2 C363.8 226.8 367.6 224.0 367.6 217.0 Z" fill="url(#rg)" stroke="#9c988c" stroke-width="0.35"/>
<path d="M356.6 193.0 L365.4 193.0 C368.7 193.0 372.0 200.5 372.0 208.0 C372.0 215.5 368.4 223.0 364.9 223.0 L357.1 223.0 C353.6 223.0 350.0 215.5 350.0 208.0 C350.0 200.5 353.3 193.0 356.6 193.0 Z" fill="url(#bg)" stroke="#9c988c" stroke-width="0.35"/>
<path d="M375.5 165.0 C375.8 145.0 377.1 137.0 377.8 127.5 Q381.0 123.5 384.2 127.0 C384.5 133.0 385.4 141.0 386.4 145.0 C386.7 137.0 387.4 129.0 388.0 127.0 Q393.1 123.0 397.6 127.5 C398.6 137.0 399.8 145.0 400.2 165.0 Z" fill="url(#rg)" stroke="#9c988c" stroke-width="0.35"/>
<path d="M375.2 161.0 H400.8 C404.0 166.2 404.5 176.6 402.1 183.9 C399.2 188.0 391.2 187.0 388.0 183.1 C384.8 187.0 376.8 188.0 373.9 183.9 C371.5 176.6 372.0 166.2 375.2 161.0 Z" fill="url(#bg)" stroke="#9c988c" stroke-width="0.35"/>
<path d="M388.0 167.5 C387.0 174.0 388.0 179.2 388.0 183.1" stroke="#c8c8c0" stroke-width="1" fill="none"/>
<path d="M379.0 221.0 C379.0 232.0 384.5 236.4 384.5 239.5 A3.5 3.5 0 0 0 391.5 239.5 C391.5 236.4 397.0 232.0 397.0 221.0 Z" fill="url(#rg)" stroke="#9c988c" stroke-width="0.35"/>
<path d="M380.8 191.0 L395.2 191.0 C400.7 191.0 404.0 197.8 404.0 209.0 C404.0 220.2 401.0 227.0 396.0 227.0 L380.0 227.0 C375.0 227.0 372.0 220.2 372.0 209.0 C372.0 197.8 375.3 191.0 380.8 191.0 Z" fill="url(#bg)" stroke="#9c988c" stroke-width="0.35"/>
<path d="M214.3 160 V128 C214.3 123.5 225.6 123.5 225.6 128 V160 Z" fill="#0c0cb4" />
<rect x="214" y="128" width="12" height="0.8" fill="#000090" opacity="0.55"/>
<rect x="214" y="130" width="12" height="0.8" fill="#000090" opacity="0.55"/>
<rect x="214" y="132" width="12" height="0.8" fill="#000090" opacity="0.55"/>
<rect x="214" y="134" width="12" height="0.8" fill="#000090" opacity="0.55"/>
<rect x="214" y="136" width="12" height="0.8" fill="#000090" opacity="0.55"/>
<rect x="214" y="138" width="12" height="0.8" fill="#000090" opacity="0.55"/>
<rect x="214" y="140" width="12" height="0.8" fill="#000090" opacity="0.55"/>
<rect x="214" y="142" width="12" height="0.8" fill="#000090" opacity="0.55"/>
<rect x="214" y="144" width="12" height="0.8" fill="#000090" opacity="0.55"/>
<rect x="214" y="146" width="12" height="0.8" fill="#000090" opacity="0.55"/>
<rect x="214" y="148" width="12" height="0.8" fill="#000090" opacity="0.55"/>
<rect x="214" y="150" width="12" height="0.8" fill="#000090" opacity="0.55"/>
<rect x="214" y="152" width="12" height="0.8" fill="#000090" opacity="0.55"/>
<rect x="214" y="154" width="12" height="0.8" fill="#000090" opacity="0.55"/>
<rect x="214" y="156" width="12" height="0.8" fill="#000090" opacity="0.55"/>
<rect x="214" y="158" width="12" height="0.8" fill="#000090" opacity="0.55"/>
<path d="M214.8 156.5 L225.8 156.5 C228.1 156.5 230.5 165.5 230.5 174.5 C230.5 180.0 228.4 185.5 226.2 185.5 L214.2 185.5 C212.1 185.5 210.0 180.0 210.0 174.5 C210.0 165.5 212.4 156.5 214.8 156.5 Z" fill="url(#lp)" stroke="#9c988c" stroke-width="0.35"/>
<path d="M211.2 194.8 L229.2 194.8 C229.6 194.8 230.5 199.8 230.5 201.9 C230.5 206.9 225.1 218.5 222.8 218.5 L217.8 218.5 C215.4 218.5 210.0 206.9 210.0 201.9 C210.0 199.8 210.9 194.8 211.2 194.8 Z" fill="url(#lp)" stroke="#9c988c" stroke-width="0.35"/>
<path d="M329 168 C328 155 326 145 327 132 C329 131 330 132 331 135 C331 148 333 158 333 168 Z" fill="url(#rg)" stroke="#9c988c" stroke-width="0.35"/>
<path d="M346 168 C345 155 343 145 344 134 C346 133 347 134 348 137 C348 148 352 158 352 168 Z" fill="url(#rg)" stroke="#9c988c" stroke-width="0.35"/>
<path d="M333.0 166.0 C333.0 151.5 336.0 145.7 336.0 140.0 A3.0 3.0 0 0 1 342.0 140.0 C342.0 145.7 345.0 151.5 345.0 166.0 Z" fill="url(#rg)" stroke="#9c988c" stroke-width="0.35"/>
<path d="M330.0 161.0 L346.0 161.0 C348.4 161.0 350.0 164.6 350.0 170.0 C350.0 175.4 348.4 179.0 346.0 179.0 L330.0 179.0 C327.6 179.0 326.0 175.4 326.0 170.0 C326.0 164.6 327.6 161.0 330.0 161.0 Z" fill="url(#cg)" stroke="#9c988c" stroke-width="0.35"/>
<path d="M333.0 216.0 C333.0 227.0 336.5 231.4 336.5 235.5 A2.5 2.5 0 0 0 341.5 235.5 C341.5 231.4 345.0 227.0 345.0 216.0 Z" fill="url(#rg)" stroke="#9c988c" stroke-width="0.35"/>
<path d="M333.0 198.0 L345.0 198.0 C348.5 198.0 350.0 201.8 350.0 210.5 C350.0 219.2 348.2 223.0 344.0 223.0 L334.0 223.0 C329.8 223.0 328.0 219.2 328.0 210.5 C328.0 201.8 329.5 198.0 333.0 198.0 Z" fill="url(#cg)" stroke="#9c988c" stroke-width="0.35"/>
<path d="M112 170 C112 178 114 184 118 184 L122 181 L127 184 L131 180 L136 184 C139 183 141 178 141 170" fill="none" stroke="#1a6a1a" stroke-width="1.3"/>
<path d="M112 200 L122 201 L124 194 L132 193 L132 200 L141 201 L141 211 L132 212 L130 217 L124 213 L119 217 L116 210 L112 210 Z" fill="#0e720e" />
<path d="M164.5 200 C168 198 176 199 184 198 L185 207 C178 205 171 206 165 212 Z" fill="#e49494" />
<path d="M165 166 C164.5 170 164.5 176 165.5 180 L164.5 180 C164 176 164 170 165 166 Z" fill="#e08080" stroke="#e08080" stroke-width="1"/>
<path d="M232 175 L237.5 174 L236 180.5 L242.5 178 L243 189" fill="none" stroke="#000" stroke-width="1.3"/>
<text x="96" y="249.3" text-anchor="middle" font-family="Liberation Sans" font-size="11.5" fill="#111">2</text>
<text x="126" y="249.3" text-anchor="middle" font-family="Liberation Sans" font-size="11.5" fill="#111">3</text>
<text x="153" y="249.3" text-anchor="middle" font-family="Liberation Sans" font-size="11.5" fill="#111">4</text>
<text x="175" y="249.3" text-anchor="middle" font-family="Liberation Sans" font-size="11.5" fill="#111">5</text>
<text x="198" y="249.3" text-anchor="middle" font-family="Liberation Sans" font-size="11.5" fill="#111">6</text>
<text x="220" y="249.3" text-anchor="middle" font-family="Liberation Sans" font-size="11.5" fill="#111">7</text>
<text x="243" y="249.3" text-anchor="middle" font-family="Liberation Sans" font-size="11.5" fill="#111">8</text>
<text x="270.7" y="249.3" text-anchor="middle" font-family="Liberation Sans" font-size="11.5" fill="#111">9</text>
<text x="293.8" y="249.3" text-anchor="middle" font-family="Liberation Sans" font-size="11.5" fill="#111">10</text>
<text x="315.7" y="249.3" text-anchor="middle" font-family="Liberation Sans" font-size="11.5" fill="#111">11</text>
<text x="361.2" y="249.3" text-anchor="middle" font-family="Liberation Sans" font-size="11.5" fill="#111">13</text>
<text x="387.8" y="249.3" text-anchor="middle" font-family="Liberation Sans" font-size="11.5" fill="#111">14</text>
<text x="417.9" y="249.3" text-anchor="middle" font-family="Liberation Sans" font-size="11.5" fill="#111">15</text>
<text x="339.5" y="234" text-anchor="middle" font-family="Liberation Sans" font-size="10" fill="#402020">I</text>
<rect x="52" y="254.5" width="410" height="1.5" fill="#111"/>
<text x="107.4" y="266.5" text-anchor="middle" font-family="Liberation Sans" font-size="11.5" fill="#111">31</text>
<text x="141.6" y="266.5" text-anchor="middle" font-family="Liberation Sans" font-size="11.5" fill="#111">30</text>
<text x="170.2" y="266.5" text-anchor="middle" font-family="Liberation Sans" font-size="11.5" fill="#111">29</text>
<text x="192.2" y="266.5" text-anchor="middle" font-family="Liberation Sans" font-size="11.5" fill="#111">28</text>
<text x="214.1" y="266.5" text-anchor="middle" font-family="Liberation Sans" font-size="11.5" fill="#111">27</text>
<text x="232.8" y="266.5" text-anchor="middle" font-family="Liberation Sans" font-size="11.5" fill="#111">26</text>
<text x="248.7" y="266.5" text-anchor="middle" font-family="Liberation Sans" font-size="11.5" fill="#111">25</text>
<text x="264.5" y="266.5" text-anchor="middle" font-family="Liberation Sans" font-size="11.5" fill="#111">24</text>
<text x="280.1" y="266.5" text-anchor="middle" font-family="Liberation Sans" font-size="11.5" fill="#111">23</text>
<text x="299.2" y="266.5" text-anchor="middle" font-family="Liberation Sans" font-size="11.5" fill="#111">22</text>
<text x="321.2" y="266.5" text-anchor="middle" font-family="Liberation Sans" font-size="11.5" fill="#111">21</text>
<text x="343.2" y="266.5" text-anchor="middle" font-family="Liberation Sans" font-size="11.5" fill="#111">20</text>
<text x="372.4" y="266.5" text-anchor="middle" font-family="Liberation Sans" font-size="11.5" fill="#111">19</text>
<text x="405.8" y="266.5" text-anchor="middle" font-family="Liberation Sans" font-size="11.5" fill="#111">18</text>
<path d="M93.1 295.0 C93.1 285.5 96.1 281.7 96.1 281.8 A5.8 5.8 0 0 1 107.7 281.8 C107.7 281.7 110.7 285.5 110.7 295.0 Z" fill="url(#rg)" stroke="#9c988c" stroke-width="0.35"/>
<path d="M104.9 295.0 C104.9 284.5 108.5 280.3 108.5 279.8 A5.8 5.8 0 0 1 120.0 279.8 C120.0 280.3 123.5 284.5 123.5 295.0 Z" fill="url(#rg)" stroke="#9c988c" stroke-width="0.35"/>
<path d="M99.5 283.0 L115.5 283.0 C120.5 283.0 123.5 289.3 123.5 299.5 C123.5 309.7 120.5 316.0 115.5 316.0 L99.5 316.0 C94.5 316.0 91.5 309.7 91.5 299.5 C91.5 289.3 94.5 283.0 99.5 283.0 Z" fill="url(#cg)" stroke="#9c988c" stroke-width="0.35"/>
<path d="M94.1 342.0 C93.4 361.8 95.3 377.2 96.6 384.0 Q99.5 387.5 103.0 383.0 C103.7 375.0 105.6 364.0 107.5 361.8 C109.4 368.4 111.3 379.4 112.6 383.0 Q115.8 387.5 119.0 384.0 C120.3 377.2 121.6 361.8 120.9 342.0 Z" fill="url(#rg)" stroke="#9c988c" stroke-width="0.35"/>
<path d="M163.2 295.4 C163.2 283.2 167.2 278.3 167.2 273.3 A2.3 2.3 0 0 1 171.8 273.3 C171.8 278.3 175.8 283.2 175.8 295.4 Z" fill="url(#rg)" stroke="#9c988c" stroke-width="0.35"/>
<path d="M165.3 287.4 L173.7 287.4 C176.8 287.4 180.0 293.5 180.0 299.7 C180.0 305.9 176.6 312.0 173.2 312.0 L165.8 312.0 C162.4 312.0 159.0 305.9 159.0 299.7 C159.0 293.5 162.2 287.4 165.3 287.4 Z" fill="url(#cg)" stroke="#9c988c" stroke-width="0.35"/>
<path d="M162.2 341.4 C162.2 365.7 167.4 375.4 167.4 387.9 A2.1 2.1 0 0 0 171.6 387.9 C171.6 375.4 176.8 365.7 176.8 341.4 Z" fill="url(#rg)" stroke="#9c988c" stroke-width="0.35"/>
<path d="M165.8 322.0 L173.2 322.0 C176.2 322.0 180.0 328.0 180.0 333.0 C180.0 339.0 177.7 346.4 175.8 346.4 L163.2 346.4 C161.3 346.4 159.0 339.0 159.0 333.0 C159.0 328.0 162.8 322.0 165.8 322.0 Z" fill="url(#cg)" stroke="#9c988c" stroke-width="0.35"/>
<path d="M185.4 295.4 C185.4 281.7 189.6 276.2 189.6 270.4 A2.4 2.4 0 0 1 194.4 270.4 C194.4 276.2 198.6 281.7 198.6 295.4 Z" fill="url(#rg)" stroke="#9c988c" stroke-width="0.35"/>
<path d="M187.6 287.4 L196.4 287.4 C199.7 287.4 203.0 294.0 203.0 300.7 C203.0 307.4 199.4 314.0 195.8 314.0 L188.2 314.0 C184.6 314.0 181.0 307.4 181.0 300.7 C181.0 294.0 184.3 287.4 187.6 287.4 Z" fill="url(#cg)" stroke="#9c988c" stroke-width="0.35"/>
<path d="M184.3 342.0 C184.3 365.8 189.8 375.2 189.8 387.3 A2.2 2.2 0 0 0 194.2 387.3 C194.2 375.2 199.7 365.8 199.7 342.0 Z" fill="url(#rg)" stroke="#9c988c" stroke-width="0.35"/>
<path d="M188.2 321.0 L195.8 321.0 C199.1 321.0 203.0 327.4 203.0 332.7 C203.0 339.1 200.6 347.0 198.6 347.0 L185.4 347.0 C183.4 347.0 181.0 339.1 181.0 332.7 C181.0 327.4 184.9 321.0 188.2 321.0 Z" fill="url(#cg)" stroke="#9c988c" stroke-width="0.35"/>
<path d="M207.8 294.4 C207.8 280.4 211.9 274.9 211.9 268.9 A2.4 2.4 0 0 1 216.6 268.9 C216.6 274.9 220.7 280.4 220.7 294.4 Z" fill="url(#rg)" stroke="#9c988c" stroke-width="0.35"/>
<path d="M209.9 286.4 L218.6 286.4 C221.8 286.4 225.0 293.8 225.0 301.2 C225.0 308.6 221.5 316.0 218.0 316.0 L210.5 316.0 C207.0 316.0 203.5 308.6 203.5 301.2 C203.5 293.8 206.7 286.4 209.9 286.4 Z" fill="url(#cg)" stroke="#9c988c" stroke-width="0.35"/>
<path d="M206.7 350.5 C206.7 375.5 212.1 385.5 212.1 398.4 A2.1 2.1 0 0 0 216.4 398.4 C216.4 385.5 221.8 375.5 221.8 350.5 Z" fill="url(#rg)" stroke="#9c988c" stroke-width="0.35"/>
<path d="M212.1 319.0 L216.4 319.0 C220.3 319.0 225.0 328.0 225.0 335.4 C225.0 344.5 222.6 355.5 220.7 355.5 L207.8 355.5 C205.9 355.5 203.5 344.5 203.5 335.4 C203.5 328.0 208.2 319.0 212.1 319.0 Z" fill="url(#cg)" stroke="#9c988c" stroke-width="0.35"/>
<path d="M227.7 296.5 C227.7 283.2 230.8 277.9 230.8 272.4 A2.4 2.4 0 0 1 235.5 272.4 C235.5 277.9 238.6 283.2 238.6 296.5 Z" fill="url(#rg)" stroke="#9c988c" stroke-width="0.35"/>
<path d="M230.4 288.5 L235.9 288.5 C236.5 288.5 241.0 308.7 241.0 311.4 C241.0 311.8 240.9 314.0 240.8 314.0 L225.5 314.0 C225.4 314.0 225.3 311.8 225.3 311.4 C225.3 308.7 229.8 288.5 230.4 288.5 Z" fill="url(#cg)" stroke="#9c988c" stroke-width="0.35"/>
<path d="M227.2 348.5 C227.2 368.8 231.4 376.9 231.4 387.3 A1.7 1.7 0 0 0 234.9 387.3 C234.9 376.9 239.1 368.8 239.1 348.5 Z" fill="url(#rg)" stroke="#9c988c" stroke-width="0.35"/>
<path d="M225.5 324.0 L240.8 324.0 C240.9 324.0 241.0 327.7 241.0 328.6 C241.0 333.8 238.5 354.5 237.9 354.5 L228.4 354.5 C227.8 354.5 225.3 333.8 225.3 328.6 C225.3 327.7 225.4 324.0 225.5 324.0 Z" fill="url(#cg)" stroke="#9c988c" stroke-width="0.35"/>
<path d="M243.4 296.5 C243.4 283.2 246.6 277.9 246.6 272.4 A2.4 2.4 0 0 1 251.4 272.4 C251.4 277.9 254.6 283.2 254.6 296.5 Z" fill="url(#rg)" stroke="#9c988c" stroke-width="0.35"/>
<path d="M246.2 288.5 L251.8 288.5 C252.4 288.5 257.0 308.7 257.0 311.4 C257.0 311.8 256.9 314.0 256.8 314.0 L241.2 314.0 C241.1 314.0 241.0 311.8 241.0 311.4 C241.0 308.7 245.6 288.5 246.2 288.5 Z" fill="url(#cg)" stroke="#9c988c" stroke-width="0.35"/>
<path d="M242.9 348.5 C242.9 368.8 247.2 376.9 247.2 387.2 A1.8 1.8 0 0 0 250.8 387.2 C250.8 376.9 255.1 368.8 255.1 348.5 Z" fill="url(#rg)" stroke="#9c988c" stroke-width="0.35"/>
<path d="M241.2 324.0 L256.8 324.0 C256.9 324.0 257.0 327.7 257.0 328.6 C257.0 333.8 254.4 354.5 253.8 354.5 L244.2 354.5 C243.6 354.5 241.0 333.8 241.0 328.6 C241.0 327.7 241.1 324.0 241.2 324.0 Z" fill="url(#cg)" stroke="#9c988c" stroke-width="0.35"/>
<path d="M259.4 296.5 C259.4 283.2 262.6 277.9 262.6 272.4 A2.4 2.4 0 0 1 267.4 272.4 C267.4 277.9 270.6 283.2 270.6 296.5 Z" fill="url(#rg)" stroke="#9c988c" stroke-width="0.35"/>
<path d="M262.2 288.5 L267.8 288.5 C268.4 288.5 273.0 308.7 273.0 311.4 C273.0 311.8 272.9 314.0 272.8 314.0 L257.2 314.0 C257.1 314.0 257.0 311.8 257.0 311.4 C257.0 308.7 261.6 288.5 262.2 288.5 Z" fill="url(#cg)" stroke="#9c988c" stroke-width="0.35"/>
<path d="M258.9 348.5 C258.9 368.8 263.2 376.9 263.2 387.2 A1.8 1.8 0 0 0 266.8 387.2 C266.8 376.9 271.1 368.8 271.1 348.5 Z" fill="url(#rg)" stroke="#9c988c" stroke-width="0.35"/>
<path d="M257.2 324.0 L272.8 324.0 C272.9 324.0 273.0 327.7 273.0 328.6 C273.0 333.8 270.4 354.5 269.8 354.5 L260.2 354.5 C259.6 354.5 257.0 333.8 257.0 328.6 C257.0 327.7 257.1 324.0 257.2 324.0 Z" fill="url(#cg)" stroke="#9c988c" stroke-width="0.35"/>
<path d="M275.3 296.5 C275.3 283.2 278.4 277.9 278.4 272.3 A2.3 2.3 0 0 1 283.1 272.3 C283.1 277.9 286.2 283.2 286.2 296.5 Z" fill="url(#rg)" stroke="#9c988c" stroke-width="0.35"/>
<path d="M278.0 288.5 L283.5 288.5 C284.1 288.5 288.5 308.7 288.5 311.4 C288.5 311.8 288.4 314.0 288.3 314.0 L273.2 314.0 C273.1 314.0 273.0 311.8 273.0 311.4 C273.0 308.7 277.4 288.5 278.0 288.5 Z" fill="url(#cg)" stroke="#9c988c" stroke-width="0.35"/>
<path d="M274.9 348.5 C274.9 368.8 279.0 376.9 279.0 387.3 A1.7 1.7 0 0 0 282.5 387.3 C282.5 376.9 286.6 368.8 286.6 348.5 Z" fill="url(#rg)" stroke="#9c988c" stroke-width="0.35"/>
<path d="M273.2 324.0 L288.3 324.0 C288.4 324.0 288.5 327.7 288.5 328.6 C288.5 333.8 286.0 354.5 285.4 354.5 L276.1 354.5 C275.5 354.5 273.0 333.8 273.0 328.6 C273.0 327.7 273.1 324.0 273.2 324.0 Z" fill="url(#cg)" stroke="#9c988c" stroke-width="0.35"/>
<path d="M292.8 294.4 C292.8 280.9 296.9 275.6 296.9 269.9 A2.4 2.4 0 0 1 301.6 269.9 C301.6 275.6 305.7 280.9 305.7 294.4 Z" fill="url(#rg)" stroke="#9c988c" stroke-width="0.35"/>
<path d="M294.9 286.4 L303.6 286.4 C306.8 286.4 310.0 293.8 310.0 301.2 C310.0 308.6 306.5 316.0 303.0 316.0 L295.5 316.0 C292.0 316.0 288.5 308.6 288.5 301.2 C288.5 293.8 291.7 286.4 294.9 286.4 Z" fill="url(#cg)" stroke="#9c988c" stroke-width="0.35"/>
<path d="M291.7 350.5 C291.7 375.5 297.1 385.5 297.1 398.4 A2.1 2.1 0 0 0 301.4 398.4 C301.4 385.5 306.8 375.5 306.8 350.5 Z" fill="url(#rg)" stroke="#9c988c" stroke-width="0.35"/>
<path d="M297.1 319.0 L301.4 319.0 C305.3 319.0 310.0 328.0 310.0 335.4 C310.0 344.5 307.6 355.5 305.7 355.5 L292.8 355.5 C290.9 355.5 288.5 344.5 288.5 335.4 C288.5 328.0 293.2 319.0 297.1 319.0 Z" fill="url(#cg)" stroke="#9c988c" stroke-width="0.35"/>
<path d="M314.4 295.0 C314.4 281.0 318.6 275.4 318.6 269.4 A2.4 2.4 0 0 1 323.4 269.4 C323.4 275.4 327.6 281.0 327.6 295.0 Z" fill="url(#rg)" stroke="#9c988c" stroke-width="0.35"/>
<path d="M316.6 287.0 L325.4 287.0 C328.7 287.0 332.0 294.0 332.0 301.0 C332.0 308.0 328.4 315.0 324.9 315.0 L317.1 315.0 C313.6 315.0 310.0 308.0 310.0 301.0 C310.0 294.0 313.3 287.0 316.6 287.0 Z" fill="url(#cg)" stroke="#9c988c" stroke-width="0.35"/>
<path d="M313.3 341.7 C313.3 365.6 318.8 375.2 318.8 387.3 A2.2 2.2 0 0 0 323.2 387.3 C323.2 375.2 328.7 365.6 328.7 341.7 Z" fill="url(#rg)" stroke="#9c988c" stroke-width="0.35"/>
<path d="M317.1 320.0 L324.9 320.0 C328.1 320.0 332.0 326.6 332.0 332.0 C332.0 338.6 329.6 346.7 327.6 346.7 L314.4 346.7 C312.4 346.7 310.0 338.6 310.0 332.0 C310.0 326.6 313.9 320.0 317.1 320.0 Z" fill="url(#cg)" stroke="#9c988c" stroke-width="0.35"/>
<path d="M337.2 294.0 C337.2 282.5 341.2 277.9 341.2 273.3 A2.3 2.3 0 0 1 345.8 273.3 C345.8 277.9 349.8 282.5 349.8 294.0 Z" fill="url(#rg)" stroke="#9c988c" stroke-width="0.35"/>
<path d="M339.3 286.0 L347.7 286.0 C350.9 286.0 354.0 292.6 354.0 299.3 C354.0 306.0 350.6 312.6 347.2 312.6 L339.8 312.6 C336.4 312.6 333.0 306.0 333.0 299.3 C333.0 292.6 336.1 286.0 339.3 286.0 Z" fill="url(#cg)" stroke="#9c988c" stroke-width="0.35"/>
<path d="M336.1 340.6 C336.1 365.6 341.4 375.6 341.4 388.5 A2.1 2.1 0 0 0 345.6 388.5 C345.6 375.6 350.9 365.6 350.9 340.6 Z" fill="url(#rg)" stroke="#9c988c" stroke-width="0.35"/>
<path d="M339.8 321.4 L347.2 321.4 C350.2 321.4 354.0 327.4 354.0 332.3 C354.0 338.3 351.7 345.6 349.8 345.6 L337.2 345.6 C335.3 345.6 333.0 338.3 333.0 332.3 C333.0 327.4 336.8 321.4 339.8 321.4 Z" fill="url(#cg)" stroke="#9c988c" stroke-width="0.35"/>
<path d="M391.1 295.0 C391.1 285.5 394.3 281.7 394.3 281.9 A5.9 5.9 0 0 1 406.2 281.9 C406.2 281.7 409.3 285.5 409.3 295.0 Z" fill="url(#rg)" stroke="#9c988c" stroke-width="0.35"/>
<path d="M403.4 295.0 C403.4 284.5 407.0 280.3 407.0 279.9 A5.9 5.9 0 0 1 418.9 279.9 C418.9 280.3 422.5 284.5 422.5 295.0 Z" fill="url(#rg)" stroke="#9c988c" stroke-width="0.35"/>
<path d="M397.8 283.0 L414.2 283.0 C419.4 283.0 422.5 289.3 422.5 299.5 C422.5 309.7 419.4 316.0 414.2 316.0 L397.8 316.0 C392.6 316.0 389.5 309.7 389.5 299.5 C389.5 289.3 392.6 283.0 397.8 283.0 Z" fill="url(#cg)" stroke="#9c988c" stroke-width="0.35"/>
<path d="M392.1 344.0 C391.5 362.9 393.5 377.6 394.8 384.0 Q397.8 387.5 401.4 383.0 C402.0 375.5 404.0 365.0 406.0 362.9 C408.0 369.2 410.0 379.7 411.3 383.0 Q414.6 387.5 417.9 384.0 C419.2 377.6 420.5 362.9 419.9 344.0 Z" fill="url(#rg)" stroke="#9c988c" stroke-width="0.35"/>
<path d="M126.2 296.0 C126.2 284.0 129.5 279.2 129.5 278.2 A6.2 6.2 0 0 1 141.9 278.2 C141.9 279.2 145.2 284.0 145.2 296.0 Z" fill="url(#rg)" stroke="#9c988c" stroke-width="0.35"/>
<path d="M139.0 296.0 C139.0 283.0 142.8 277.8 142.8 276.2 A6.2 6.2 0 0 1 155.2 276.2 C155.2 277.8 159.0 283.0 159.0 296.0 Z" fill="url(#rg)" stroke="#9c988c" stroke-width="0.35"/>
<path d="M133.1 284.0 L150.4 284.0 C155.7 284.0 159.0 290.3 159.0 300.5 C159.0 310.7 155.7 317.0 150.4 317.0 L133.1 317.0 C127.8 317.0 124.5 310.7 124.5 300.5 C124.5 290.3 127.8 284.0 133.1 284.0 Z" fill="url(#gg)" stroke="#9c988c" stroke-width="0.35"/>
<path d="M127.3 344.0 C126.6 364.5 128.6 380.4 130.0 387.5 Q133.1 391.0 136.9 386.5 C137.6 378.1 139.7 366.8 141.8 364.5 C143.8 371.3 145.9 382.7 147.3 386.5 Q150.7 391.0 154.2 387.5 C155.6 380.4 156.9 364.5 156.2 344.0 Z" fill="url(#rg)" stroke="#9c988c" stroke-width="0.35"/>
<path d="M359.7 296.0 C359.7 284.0 362.9 279.2 362.9 278.0 A6.0 6.0 0 0 1 374.9 278.0 C374.9 279.2 378.1 284.0 378.1 296.0 Z" fill="url(#rg)" stroke="#9c988c" stroke-width="0.35"/>
<path d="M372.1 296.0 C372.1 283.0 375.8 277.8 375.8 276.0 A6.0 6.0 0 0 1 387.8 276.0 C387.8 277.8 391.5 283.0 391.5 296.0 Z" fill="url(#rg)" stroke="#9c988c" stroke-width="0.35"/>
<path d="M361.4 284.0 L378.1 284.0 C383.3 284.0 386.5 290.3 386.5 300.5 C386.5 310.7 383.3 317.0 378.1 317.0 L361.4 317.0 C356.2 317.0 353.0 310.7 353.0 300.5 C353.0 290.3 356.2 284.0 361.4 284.0 Z" fill="url(#gg)" stroke="#9c988c" stroke-width="0.35"/>
<path d="M358 344 C358 360 366 378 372 387 Q376 391 378 386 C376 374 372 362 370 350 L374 350 C379 362 386 374 389 385 Q392 389 394 385 C391 372 388 356 386 344 Z" fill="url(#rg)" stroke="#9c988c" stroke-width="0.35"/>
<path d="M93.4 326.5 C96.3 323.0 104.3 324.0 107.5 327.1 C110.7 324.0 118.7 323.0 121.6 326.5 C124.0 332.4 123.5 340.8 120.3 345.0 H94.7 C91.5 340.8 91.0 332.4 93.4 326.5 Z" fill="url(#cg)" stroke="#9c988c" stroke-width="0.35"/>
<path d="M391.5 327.6 C394.4 324.0 402.7 325.0 406.0 328.3 C409.3 325.0 417.6 324.0 420.5 327.6 C423.0 333.8 422.5 342.6 419.2 347.0 H392.8 C389.5 342.6 389.0 333.8 391.5 327.6 Z" fill="url(#cg)" stroke="#9c988c" stroke-width="0.35"/>
<path d="M126.6 324.6 C129.7 320.5 138.3 321.5 141.8 325.3 C145.2 321.5 153.8 320.5 156.9 324.6 C159.5 331.7 159.0 341.9 155.6 347.0 H128.0 C124.5 341.9 124.0 331.7 126.6 324.6 Z" fill="url(#gg)" stroke="#9c988c" stroke-width="0.35"/>
<path d="M355.0 324.1 C358.0 320.0 366.4 321.0 369.8 324.9 C373.1 321.0 381.5 320.0 384.5 324.1 C387.0 331.4 386.5 341.8 383.1 347.0 H356.4 C353.0 341.8 352.5 331.4 355.0 324.1 Z" fill="url(#gg)" stroke="#9c988c" stroke-width="0.35"/>
<path d="M97.3 299.5 H117.7 M107.5 287.9 V311.1" stroke="#505048" stroke-width="3.2" opacity="0.6" filter="url(#bl)"/>
<rect x="93.0" y="284.5" width="13.5" height="14.0" rx="6.1" fill="url(#cg)" opacity="0.55"/>
<rect x="108.5" y="284.5" width="13.5" height="14.0" rx="6.1" fill="url(#cg)" opacity="0.55"/>
<rect x="93.0" y="300.5" width="13.5" height="14.0" rx="6.1" fill="url(#cg)" opacity="0.55"/>
<rect x="108.5" y="300.5" width="13.5" height="14.0" rx="6.1" fill="url(#cg)" opacity="0.55"/>
<path d="M395.4 299.5 H416.6 M406.0 287.9 V311.1" stroke="#505048" stroke-width="3.2" opacity="0.6" filter="url(#bl)"/>
<rect x="391.0" y="284.5" width="14.0" height="14.0" rx="6.3" fill="url(#cg)" opacity="0.55"/>
<rect x="407.0" y="284.5" width="14.0" height="14.0" rx="6.3" fill="url(#cg)" opacity="0.55"/>
<rect x="391.0" y="300.5" width="14.0" height="14.0" rx="6.3" fill="url(#cg)" opacity="0.55"/>
<rect x="407.0" y="300.5" width="14.0" height="14.0" rx="6.3" fill="url(#cg)" opacity="0.55"/>
<path d="M130.7 300.5 H152.8 M141.8 288.9 V312.1" stroke="#204a20" stroke-width="3.2" opacity="0.6" filter="url(#bl)"/>
<rect x="126.0" y="285.5" width="14.8" height="14.0" rx="6.6" fill="url(#gg)" opacity="0.55"/>
<rect x="142.8" y="285.5" width="14.8" height="14.0" rx="6.6" fill="url(#gg)" opacity="0.55"/>
<rect x="126.0" y="301.5" width="14.8" height="14.0" rx="6.6" fill="url(#gg)" opacity="0.55"/>
<rect x="142.8" y="301.5" width="14.8" height="14.0" rx="6.6" fill="url(#gg)" opacity="0.55"/>
<path d="M359.0 300.5 H380.5 M369.8 288.9 V312.1" stroke="#204a20" stroke-width="3.2" opacity="0.6" filter="url(#bl)"/>
<rect x="354.5" y="285.5" width="14.2" height="14.0" rx="6.4" fill="url(#gg)" opacity="0.55"/>
<rect x="370.8" y="285.5" width="14.2" height="14.0" rx="6.4" fill="url(#gg)" opacity="0.55"/>
<rect x="354.5" y="301.5" width="14.2" height="14.0" rx="6.4" fill="url(#gg)" opacity="0.55"/>
<rect x="370.8" y="301.5" width="14.2" height="14.0" rx="6.4" fill="url(#gg)" opacity="0.55"/>
<path d="M87.0 209.0 H105.0 M96.0 197.1 V220.9" stroke="#808078" stroke-width="3.2" opacity="0.6" filter="url(#bl)"/>
<rect x="83.5" y="193.5" width="11.5" height="14.5" rx="5.2" fill="url(#cg)" opacity="0.55"/>
<rect x="97.0" y="193.5" width="11.5" height="14.5" rx="5.2" fill="url(#cg)" opacity="0.55"/>
<rect x="83.5" y="210.0" width="11.5" height="14.5" rx="5.2" fill="url(#cg)" opacity="0.55"/>
<rect x="97.0" y="210.0" width="11.5" height="14.5" rx="5.2" fill="url(#cg)" opacity="0.55"/>
<path d="M409.0 209.5 H427.0 M418.0 197.2 V221.8" stroke="#808078" stroke-width="3.2" opacity="0.6" filter="url(#bl)"/>
<rect x="405.5" y="193.5" width="11.5" height="15.0" rx="5.2" fill="url(#cg)" opacity="0.55"/>
<rect x="419.0" y="193.5" width="11.5" height="15.0" rx="5.2" fill="url(#cg)" opacity="0.55"/>
<rect x="405.5" y="210.5" width="11.5" height="15.0" rx="5.2" fill="url(#cg)" opacity="0.55"/>
<rect x="419.0" y="210.5" width="11.5" height="15.0" rx="5.2" fill="url(#cg)" opacity="0.55"/>
<path d="M377.8 209.0 H398.2 M388.0 196.4 V221.6" stroke="#000050" stroke-width="3.2" opacity="0.6" filter="url(#bl)"/>
<rect x="373.5" y="192.5" width="13.5" height="15.5" rx="6.1" fill="url(#bg)" opacity="0.55"/>
<rect x="389.0" y="192.5" width="13.5" height="15.5" rx="6.1" fill="url(#bg)" opacity="0.55"/>
<rect x="373.5" y="210.0" width="13.5" height="15.5" rx="6.1" fill="url(#bg)" opacity="0.55"/>
<rect x="389.0" y="210.0" width="13.5" height="15.5" rx="6.1" fill="url(#bg)" opacity="0.55"/>
<path d="M182 297 C186 293 198 293 202.5 297 L202.5 307 C196 310 188 310 182 307 Z" fill="#e49494" />
<path d="M182.5 333 L184.5 338 L183 345 L181.5 341 Z" fill="#e08888" />
<path d="M202 333 L200 338 L201.5 345 L203 341 Z" fill="#e08888" />
<path d="M362 346 H384 L382 352 H366 Z" fill="#0f5f0f" />
<path d="M364 348 C366 362 371 376 376 388 M380 348 C383 360 388 372 392 385" fill="none" stroke="#0f5f0f" stroke-width="2.4"/>
<path d="M362 328 L384.5 381.5 M374.5 325.5 L371.5 383" stroke="#d81818" stroke-width="1.5"/>
<text x="100" y="349" font-family="Liberation Sans" font-size="11" fill="#e27818" stroke="#e27818" stroke-width="0.3">abs</text>
<text x="102.5" y="404" font-family="Liberation Sans" font-size="11" fill="#111">W</text></svg><!-- /TEETH -->

<!-- LEFT BOTTOM -->
<div class="a" style="left:52px;top:408px;width:410px;height:32px;background:#fff"></div>
<div class="t" style="left:66px;top:419px;font-size:11px">04/16/2024</div>
<div class="a" style="left:136px;top:418px;width:313px;height:4px;background:#e6e6e6;border:1px solid #d0d0d0"></div>
<div class="a" style="left:141px;top:431px;width:1px;height:4px;background:#a0a0a0"></div>
<div class="a" style="left:443px;top:432px;width:1px;height:4px;background:#a0a0a0"></div>
<svg class="a" style="left:438px;top:412px" width="11" height="20" viewBox="0 0 11 20"><path d="M0 1c0-1 1-1 1-1h9c1 0 1 1 1 1v13l-5.5 5L0 14z" fill="#1a78d8"/></svg>
<div class="a" style="left:52px;top:439px;width:410px;height:69px;background:#fff;border:1px solid #7a7a7a;border-top:2px solid #6e6e6e;border-left:2px solid #6e6e6e;border-bottom:1px solid #e0e0e0;border-right:1px solid #e0e0e0"></div>
<div class="a" style="left:52px;top:508px;width:410px;height:3px;background:#f0f0f0"></div>
<div class="hdr" style="left:52px;top:510px;width:410px">Patient Info</div>
<div class="colh" style="left:52px;top:529px;width:410px;height:14px"></div>
<div class="a" style="left:152px;top:531px;width:1px;height:10px;background:#666"></div>
<div class="a" style="left:52px;top:543px;width:391px;height:160px;background:#fff;overflow:hidden">
<div class="a" style="left:0;top:0px;width:391px;height:14px;background:#fff;border-bottom:1px solid #d6d6d6"></div>
<div class="a" style="left:100px;top:0px;width:1px;height:14px;background:#d6d6d6"></div>
<div class="t" style="left:2px;top:3px;font-weight:normal">Patient Portal</div>
<div class="t" style="left:102px;top:3px">No access</div>
<div class="a" style="left:0;top:14px;width:391px;height:14px;background:#fbc2c2;border-bottom:1px solid #d6d6d6"></div>
<div class="a" style="left:100px;top:14px;width:1px;height:14px;background:#d6d6d6"></div>
<div class="t" style="left:2px;top:17px;font-weight:bold">Allergies</div>
<div class="t" style="left:102px;top:17px">none</div>
<div class="a" style="left:0;top:28px;width:391px;height:14px;background:#fbc2c2;border-bottom:1px solid #d6d6d6"></div>
<div class="a" style="left:100px;top:28px;width:1px;height:14px;background:#d6d6d6"></div>
<div class="t" style="left:2px;top:31px;font-weight:normal">Med Urgent</div>
<div class="t" style="left:102px;top:31px"></div>
<div class="a" style="left:0;top:42px;width:391px;height:14px;background:#fbc2c2;border-bottom:1px solid #d6d6d6"></div>
<div class="a" style="left:100px;top:42px;width:1px;height:14px;background:#d6d6d6"></div>
<div class="t" style="left:2px;top:45px;font-weight:normal">Medical Summary</div>
<div class="t" style="left:102px;top:45px"></div>
<div class="a" style="left:0;top:56px;width:391px;height:14px;background:#fbc2c2;border-bottom:1px solid #d6d6d6"></div>
<div class="a" style="left:100px;top:56px;width:1px;height:14px;background:#d6d6d6"></div>
<div class="t" style="left:2px;top:59px;font-weight:bold">Medications</div>
<div class="t" style="left:102px;top:59px">none</div>
<div class="a" style="left:0;top:70px;width:391px;height:14px;background:#fbc2c2;border-bottom:1px solid #d6d6d6"></div>
<div class="a" style="left:100px;top:70px;width:1px;height:14px;background:#d6d6d6"></div>
<div class="t" style="left:2px;top:73px;font-weight:bold">Problems</div>
<div class="t" style="left:102px;top:73px">none</div>
<div class="a" style="left:0;top:84px;width:391px;height:14px;background:#fff;border-bottom:1px solid #d6d6d6"></div>
<div class="a" style="left:100px;top:84px;width:1px;height:14px;background:#d6d6d6"></div>
<div class="t" style="left:2px;top:87px;font-weight:normal">Age</div>
<div class="t" style="left:102px;top:87px">60</div>
<div class="a" style="left:0;top:98px;width:391px;height:14px;background:#fff;border-bottom:1px solid #d6d6d6"></div>
<div class="a" style="left:100px;top:98px;width:1px;height:14px;background:#d6d6d6"></div>
<div class="t" style="left:2px;top:101px;font-weight:normal">ABC0</div>
<div class="t" style="left:102px;top:101px"></div>
<div class="a" style="left:0;top:112px;width:391px;height:14px;background:#fff;border-bottom:1px solid #d6d6d6"></div>
<div class="a" style="left:100px;top:112px;width:1px;height:14px;background:#d6d6d6"></div>
<div class="t" style="left:2px;top:115px;font-weight:normal">Billing Type</div>
<div class="t" style="left:102px;top:115px">Standard</div>
<div class="a" style="left:0;top:126px;width:391px;height:14px;background:#fff;border-bottom:1px solid #d6d6d6"></div>
<div class="a" style="left:100px;top:126px;width:1px;height:14px;background:#d6d6d6"></div>
<div class="t" style="left:2px;top:129px;font-weight:normal">Referred From</div>
<div class="t" style="left:102px;top:129px">??</div>
<div class="a" style="left:0;top:140px;width:391px;height:14px;background:#fff;border-bottom:1px solid #d6d6d6"></div>
<div class="a" style="left:100px;top:140px;width:1px;height:14px;background:#d6d6d6"></div>
<div class="t" style="left:2px;top:143px;font-weight:normal">Date First Visit</div>
<div class="t" style="left:102px;top:143px">03/21/2024</div>
<div class="a" style="left:0;top:154px;width:391px;height:14px;background:#fff;border-bottom:1px solid #d6d6d6"></div>
<div class="a" style="left:100px;top:154px;width:1px;height:14px;background:#d6d6d6"></div>
<div class="t" style="left:2px;top:157px;font-weight:normal">Prov. (Pri, Sec)</div>
<div class="t" style="left:102px;top:157px">Dr. Nagy     N</div>
</div>
<div class="a" style="left:443px;top:543px;width:18px;height:160px;background:#f0f0f0;border-left:1px solid #e0e0e0"></div>
<div class="a" style="left:452px;top:561px;width:2px;height:83px;background:#7a7a7a"></div>
<div class="a" style="left:52px;top:703px;width:410px;height:1px;background:#5a6a90"></div>
<div class="a" style="left:52px;top:704px;width:410px;height:24px;background:#fff"></div>


<div class="a" style="left:53px;top:708px;width:27px;height:19px;background:#b4c6e8;border:1px solid #c8c8c8;border-top-left-radius:2px;border-top-right-radius:2px"></div>
<div class="t" style="left:53px;width:27px;text-align:center;top:712px;font-size:11px">All</div>
<div class="a" style="left:80px;top:707px;width:34px;height:19px;background:#f4f4f4;border:1px solid #c8c8c8;border-top-left-radius:2px;border-top-right-radius:2px"></div>
<div class="t" style="left:80px;width:34px;text-align:center;top:712px;font-size:11px">BWs</div>
<div class="a" style="left:114px;top:707px;width:41px;height:19px;background:#f4f4f4;border:1px solid #c8c8c8;border-top-left-radius:2px;border-top-right-radius:2px"></div>
<div class="t" style="left:114px;width:41px;text-align:center;top:712px;font-size:11px">FMXs</div>
<div class="a" style="left:155px;top:707px;width:42px;height:19px;background:#f4f4f4;border:1px solid #c8c8c8;border-top-left-radius:2px;border-top-right-radius:2px"></div>
<div class="t" style="left:155px;width:42px;text-align:center;top:712px;font-size:11px">Panos</div>
<div class="a" style="left:197px;top:707px;width:46px;height:19px;background:#f4f4f4;border:1px solid #c8c8c8;border-top-left-radius:2px;border-top-right-radius:2px"></div>
<div class="t" style="left:197px;width:46px;text-align:center;top:712px;font-size:11px">Photos</div>
<!-- RIGHT PANEL -->
<div class="a" style="left:462px;top:101px;width:545px;height:258px;background:#fff"></div>
<div class="a" style="left:463px;top:120px;width:525px;height:238px;background:#fff;border:1px solid #c8c8c8;border-bottom:none"></div>

<div class="a" style="left:464px;top:101px;width:97px;height:20px;background:#abc0e6;border:1px solid #9ab0d8;border-bottom:none;border-radius:3px 3px 0 0"></div>
<div class="t" style="left:464px;width:97px;text-align:center;top:106px;font-size:11px">Enter Treatment</div>
<div class="a" style="left:562px;top:103px;width:89px;height:18px;background:linear-gradient(#fbfbfb,#f0f0f0);border:1px solid #cacaca;border-bottom:none;border-radius:2px 2px 0 0"></div>
<div class="t" style="left:562px;width:89px;text-align:center;top:107px;font-size:11px">Missing/Primary</div>
<div class="a" style="left:652px;top:103px;width:70px;height:18px;background:linear-gradient(#fbfbfb,#f0f0f0);border:1px solid #cacaca;border-bottom:none;border-radius:2px 2px 0 0"></div>
<div class="t" style="left:652px;width:70px;text-align:center;top:107px;font-size:11px">Movements</div>
<div class="a" style="left:722px;top:103px;width:84px;height:18px;background:linear-gradient(#fbfbfb,#f0f0f0);border:1px solid #cacaca;border-bottom:none;border-radius:2px 2px 0 0"></div>
<div class="t" style="left:722px;width:84px;text-align:center;top:107px;font-size:11px">Planned Appts</div>
<div class="a" style="left:806px;top:103px;width:40px;height:18px;background:linear-gradient(#fbfbfb,#f0f0f0);border:1px solid #cacaca;border-bottom:none;border-radius:2px 2px 0 0"></div>
<div class="t" style="left:806px;width:40px;text-align:center;top:107px;font-size:11px">Show</div>
<div class="a" style="left:846px;top:103px;width:38px;height:18px;background:linear-gradient(#fbfbfb,#f0f0f0);border:1px solid #cacaca;border-bottom:none;border-radius:2px 2px 0 0"></div>
<div class="t" style="left:846px;width:38px;text-align:center;top:107px;font-size:11px">Draw</div>
<div class="a" style="left:884px;top:103px;width:39px;height:18px;background:linear-gradient(#fbfbfb,#f0f0f0);border:1px solid #cacaca;border-bottom:none;border-radius:2px 2px 0 0"></div>
<div class="t" style="left:884px;width:39px;text-align:center;top:107px;font-size:11px">Ortho</div>
<div class="a" style="left:474px;top:124px;width:72px;height:20px;border:1px solid #c0c0c0;border-bottom:1px solid #707070;background:#fff"></div>
<div class="btn" style="left:488px;top:145px;width:28px;height:19px;line-height:19px;font-size:11px">B/F</div>
<div class="btn" style="left:516px;top:145px;width:17px;height:19px;line-height:19px;font-size:11px">V</div>
<div class="btn" style="left:469px;top:165px;width:24px;height:20px;line-height:20px;font-size:11px">M</div>
<div class="btn" style="left:493px;top:165px;width:34px;height:20px;line-height:20px;font-size:11px">O/I</div>
<div class="btn" style="left:527px;top:165px;width:24px;height:20px;line-height:20px;font-size:11px">D</div>
<div class="btn" style="left:499px;top:186px;width:23px;height:19px;line-height:19px;font-size:11px">L</div>
<div class="a" style="left:467px;top:207px;width:88px;height:110px;border:1px solid #d0d0d0;border-radius:4px"></div>
<div class="t" style="left:474px;top:210px;font-size:11px">Entry Status</div>
<div class="a" style="left:469px;top:225px;width:13px;height:13px;border-radius:50%;background:#0a5fc0"></div><div class="a" style="left:473px;top:229px;width:5px;height:5px;border-radius:50%;background:#fff"></div>
<div class="t" style="left:488px;top:227px;font-size:11px">TreatPlan</div>
<div class="a" style="left:469px;top:240px;width:13px;height:13px;border-radius:50%;background:#f2f2f2;border:1px solid #8a8a8a"></div>
<div class="t" style="left:488px;top:242px;font-size:11px">Complete</div>
<div class="a" style="left:469px;top:255px;width:13px;height:13px;border-radius:50%;background:#f2f2f2;border:1px solid #8a8a8a"></div>
<div class="t" style="left:488px;top:257px;font-size:11px">ExstCurProv</div>
<div class="a" style="left:469px;top:270px;width:13px;height:13px;border-radius:50%;background:#f2f2f2;border:1px solid #8a8a8a"></div>
<div class="t" style="left:488px;top:272px;font-size:11px">ExstOther</div>
<div class="a" style="left:469px;top:285px;width:13px;height:13px;border-radius:50%;background:#f2f2f2;border:1px solid #8a8a8a"></div>
<div class="t" style="left:488px;top:287px;font-size:11px">Referred</div>
<div class="a" style="left:469px;top:300px;width:13px;height:13px;border-radius:50%;background:#f2f2f2;border:1px solid #8a8a8a"></div>
<div class="t" style="left:488px;top:302px;font-size:11px">Condition</div>
<div class="a" style="left:467px;top:319px;width:13px;height:13px;border:1px solid #333;background:#fff"></div>
<svg class="a" style="left:468px;top:320px" width="11" height="11"><path d="M1.5 5.5l3 3 5-7" fill="none" stroke="#222" stroke-width="1.2"/></svg>
<div class="t" style="left:485px;top:320px;font-size:11px">Today</div>
<div class="a" style="left:467px;top:334px;width:88px;height:19px;border:1px solid #c8c8c8;border-bottom:1px solid #606060;background:#fff"></div>
<div class="t" style="left:469px;top:338px;font-size:11px">04/16/2024</div>
<div class="t" style="left:558px;top:127px;font-size:11px">Diagnosis</div>
<div class="a" style="left:557px;top:138px;width:94px;height:134px;border:1px solid #7a8aa0;background:#fff;overflow:hidden">
<div class="t" style="left:3px;top:3px;font-size:11px">None</div>
<div class="t" style="left:3px;top:17px;font-size:11px">Caries</div>
<div class="t" style="left:3px;top:31px;font-size:11px">Recurrent (Car</div>
<div class="t" style="left:3px;top:45px;font-size:11px">Incipient (Car)</div>
<div class="t" style="left:3px;top:59px;font-size:11px">Defect (or miss</div>
<div class="t" style="left:3px;top:73px;font-size:11px">Missing (tooth</div>
<div class="t" style="left:3px;top:87px;font-size:11px">Irrevers. Pulp.</div>
<div class="t" style="left:3px;top:101px;font-size:11px">Revers. Pulp.</div>
<div class="t" style="left:3px;top:115px;font-size:11px">Necrotic</div>
<div class="t" style="left:3px;top:129px;font-size:11px">Apical Periodo</div>
<div class="a" style="left:76px;top:0;width:17px;height:132px;background:#f0f0f0"></div><div class="a" style="left:83px;top:17px;width:2px;height:81px;background:#6a6a6a"></div></div>
<div class="t" style="left:558px;top:283px;font-size:11px">Prognosis</div>
<div class="a" style="left:557px;top:296px;width:96px;height:21px;border:1px solid #c0c0c0;border-bottom:1px solid #8a8a8a;background:#fff"></div>
<div class="t" style="left:561px;top:303px;font-size:11px">no prognosis</div>
<svg class="a" style="left:639px;top:304px" width="9" height="5"><path d="M0.5 0.5l4 4 4-4" fill="none" stroke="#333" stroke-width="1"/></svg>
<div class="t" style="left:558px;top:320px;font-size:11px">Priority</div>
<div class="a" style="left:557px;top:334px;width:96px;height:19px;border:1px solid #c0c0c0;border-bottom:1px solid #8a8a8a;background:#fff"></div>
<div class="t" style="left:561px;top:340px;font-size:11px">no priority</div>
<svg class="a" style="left:639px;top:341px" width="9" height="5"><path d="M0.5 0.5l4 4 4-4" fill="none" stroke="#333" stroke-width="1"/></svg>
<div class="btn" style="left:657px;top:123px;width:89px;height:23px;line-height:23px;font-size:11px">Procedure List</div>
<div class="t" style="left:653px;top:150px;font-size:10.5px">Procedure Buttons:</div>
<div class="a" style="left:653px;top:162px;width:122px;height:171px;border:1px solid #7a8aa0;background:#fff"></div>
<div class="a" style="left:655px;top:164px;width:118px;height:14px;background:#b9c4dc"></div>
<div class="t" style="left:657px;top:165px;font-size:11px">Quick Buttons</div>
<div class="t" style="left:657px;top:179px;font-size:11px">General</div>
<div class="t" style="left:657px;top:193px;font-size:11px">Dentures</div>
<div class="t" style="left:657px;top:207px;font-size:11px">Exams/Cleanings</div>
<div class="a" style="left:655px;top:334px;width:104px;height:19px;border:2px solid #f4b040;background:#fff"></div>
<div class="a" style="left:659px;top:337px;width:13px;height:13px;border:1px solid #333;background:#fff"></div>
<svg class="a" style="left:660px;top:338px" width="11" height="11"><path d="M1.5 5.5l3 3 5-7" fill="none" stroke="#222" stroke-width="1.2"/></svg>
<div class="t" style="left:675px;top:338px;font-size:11px">Treatment Plans</div>
<div class="t" style="left:778px;top:130px;font-size:11px">Or</div>
<div class="a" style="left:797px;top:125px;width:107px;height:20px;border:1px solid #c8c8c8;border-bottom:1px solid #606060;background:#fff"></div>
<div class="t" style="left:800px;top:129px;font-size:11px">Type Proc Code</div>
<div class="btn" style="left:908px;top:123px;width:44px;height:23px;line-height:23px;font-size:12px">OK</div>
<div class="t" style="left:777px;top:150px;font-size:10.5px">Or Single Click:</div>
<div class="a" style="left:777px;top:162px;width:200px;height:192px;border:1px solid #4a5a80;background:#fff"></div>
<div class="t" style="left:785px;top:165px;font-size:11px">Post. Composite</div>
<div class="btn" style="left:777px;top:181px;width:29px;height:16px;line-height:16px;font-size:11px;border-color:#5a7494;border-radius:3px">MO</div>
<div class="btn" style="left:807px;top:181px;width:38px;height:16px;line-height:16px;font-size:11px;border-color:#5a7494;border-radius:3px">MOD</div>
<div class="btn" style="left:846px;top:181px;width:18px;height:16px;line-height:16px;font-size:11px;border-color:#5a7494;border-radius:3px">O</div>
<div class="btn" style="left:866px;top:181px;width:28px;height:16px;line-height:16px;font-size:11px;border-color:#5a7494;border-radius:3px">DO</div>
<div class="btn" style="left:903px;top:181px;width:34px;height:16px;line-height:16px;font-size:11px;border-color:#5a7494;border-radius:3px">Seal</div>
<div class="btn" style="left:777px;top:198px;width:25px;height:17px;line-height:17px;font-size:11px;border-color:#5a7494;border-radius:3px">OL</div>
<div class="btn" style="left:804px;top:198px;width:26px;height:17px;line-height:17px;font-size:11px;border-color:#5a7494;border-radius:3px">OB</div>
<div class="btn" style="left:832px;top:198px;width:44px;height:17px;line-height:17px;font-size:11px;border-color:#5a7494;border-radius:3px">MODL</div>
<div class="btn" style="left:877px;top:198px;width:44px;height:17px;line-height:17px;font-size:11px;border-color:#5a7494;border-radius:3px">MODB</div>
<div class="t" style="left:785px;top:237px;font-size:11px">Ant. Composite</div>
<div class="btn" style="left:777px;top:253px;width:24px;height:15px;line-height:15px;font-size:11px;border-color:#5a7494;border-radius:3px">DL</div>
<div class="btn" style="left:803px;top:253px;width:35px;height:15px;line-height:15px;font-size:11px;border-color:#5a7494;border-radius:3px">MDL</div>
<div class="btn" style="left:839px;top:253px;width:25px;height:15px;line-height:15px;font-size:11px;border-color:#5a7494;border-radius:3px">ML</div>
<div class="t" style="left:784px;top:292px;font-size:11px">Amalgam</div>
<div class="btn" style="left:777px;top:307px;width:25px;height:15px;line-height:15px;font-size:11px;border-color:#5a7494;border-radius:3px">MO</div>
<div class="btn" style="left:808px;top:307px;width:36px;height:15px;line-height:15px;font-size:11px;border-color:#5a7494;border-radius:3px">MOD</div>
<div class="btn" style="left:846px;top:307px;width:18px;height:15px;line-height:15px;font-size:11px;border-color:#5a7494;border-radius:3px">O</div>
<div class="btn" style="left:866px;top:307px;width:28px;height:15px;line-height:15px;font-size:11px;border-color:#5a7494;border-radius:3px">DO</div>
<div class="btn" style="left:777px;top:325px;width:25px;height:16px;line-height:16px;font-size:11px;border-color:#5a7494;border-radius:3px">OL</div>
<div class="btn" style="left:804px;top:325px;width:26px;height:16px;line-height:16px;font-size:11px;border-color:#5a7494;border-radius:3px">OB</div>
<div class="btn" style="left:832px;top:325px;width:44px;height:16px;line-height:16px;font-size:11px;border-color:#5a7494;border-radius:3px">MODL</div>
<div class="btn" style="left:877px;top:325px;width:44px;height:16px;line-height:16px;font-size:11px;border-color:#5a7494;border-radius:3px">MODB</div>
<div class="a" style="left:461px;top:358px;width:541px;height:348px;border:2px solid #f5b03c;background:#fff"></div>
<div class="hdr" style="left:464px;top:361px;width:435px;font-size:14px">Treatment Plans</div>
<div class="colh" style="left:464px;top:380px;width:435px;height:15px"></div>
<div class="t" style="left:471px;top:382px;font-weight:bold;font-size:11.5px">Status</div>
<div class="a" style="left:514px;top:383px;width:1px;height:10px;background:#666"></div>
<div class="t" style="left:649px;top:382px;font-weight:bold;font-size:11.5px">Heading</div>
<div class="a" style="left:830px;top:383px;width:1px;height:10px;background:#666"></div>
<div class="t" style="left:838px;top:382px;font-weight:bold;font-size:11.5px">Procs</div>
<div class="a" style="left:464px;top:395px;width:435px;height:86px;background:#fcfcfe;border:1px solid #5a6a90;border-top:none"></div>
<div class="a" style="left:465px;top:395px;width:416px;height:13px;background:#d5dfea;border-bottom:1px solid #888"></div>
<div class="t" style="left:466px;top:397px">Active</div><div class="t" style="left:516px;top:397px">Active Treatment Plan</div><div class="t" style="left:850px;top:397px">3</div>
<div class="a" style="left:881px;top:395px;width:17px;height:85px;background:#f0f0f0"></div>
<svg class="a" style="left:884px;top:399px" width="11" height="7"><path d="M1 6L5.5 1 10 6z" fill="#b0b0b0"/></svg>
<svg class="a" style="left:884px;top:468px" width="11" height="7"><path d="M1 1L5.5 6 10 1z" fill="#b0b0b0"/></svg>
<div class="btn" style="left:904px;top:361px;width:77px;height:22px;border-color:#5a7494;font-size:11px;line-height:20px;text-align:left;padding-left:29px">New TP</div>
<svg class="a" style="left:912px;top:364px" width="16" height="16"><path d="M6.5 0h3v6.5H16v3H9.5V16h-3V9.5H0v-3h6.5z" fill="#2a3a8a"/></svg>
<div class="hdr" style="left:464px;top:483px;width:460px">Procedures</div>
<div class="colh" style="left:464px;top:502px;width:460px;height:14px;border-bottom:1px solid #888"></div>
<div class="t" style="left:464px;width:50px;text-align:center;top:504px;font-weight:bold;font-size:11.5px">Priority</div>
<div class="t" style="left:515px;width:35px;text-align:center;top:504px;font-weight:bold;font-size:11.5px">Tth</div>
<div class="t" style="left:550px;width:40px;text-align:center;top:504px;font-weight:bold;font-size:11.5px">Surf</div>
<div class="t" style="left:590px;width:50px;text-align:center;top:504px;font-weight:bold;font-size:11.5px">Code</div>
<div class="t" style="left:640px;width:266px;text-align:center;top:504px;font-weight:bold;font-size:11.5px">Description</div>
<div class="a" style="left:514px;top:505px;width:1px;height:10px;background:#666"></div>
<div class="a" style="left:550px;top:505px;width:1px;height:10px;background:#666"></div>
<div class="a" style="left:589px;top:505px;width:1px;height:10px;background:#666"></div>
<div class="a" style="left:640px;top:505px;width:1px;height:10px;background:#666"></div>
<div class="a" style="left:464px;top:516px;width:460px;height:188px;background:#fcfcfe;border:1px solid #5a6a90;border-top:none"></div>
<div class="a" style="left:465px;top:516px;width:441px;height:14px;border-bottom:1px solid #c8c8c8"></div>
<div class="t" style="left:641px;top:519px;font-size:11.2px">resin-based composite - two surfaces, posterior</div>
<div class="t" style="left:517px;top:519px">5</div><div class="t" style="left:551px;top:519px">OD</div><div class="t" style="left:592px;top:519px">D2392</div>
<div class="a" style="left:465px;top:530px;width:441px;height:40px;border-bottom:1px solid #c8c8c8"></div>
<div class="t" style="left:641px;top:533px;font-size:11.2px">extraction, erupted tooth requiring removal of bone</div>
<div class="t" style="left:641px;top:546px;font-size:11.2px">and/or sectioning of tooth, and including elevation</div>
<div class="t" style="left:641px;top:559px;font-size:11.2px">of mucoperiosteal flap if indicated</div>
<div class="t" style="left:517px;top:533px">19</div><div class="t" style="left:551px;top:533px"></div><div class="t" style="left:592px;top:533px">D7210</div>
<div class="a" style="left:465px;top:570px;width:441px;height:13px;border-bottom:1px solid #c8c8c8"></div>
<div class="t" style="left:641px;top:573px;font-size:11.2px">resin-based composite - three surfaces, posterior</div>
<div class="t" style="left:517px;top:573px">28</div><div class="t" style="left:551px;top:573px">MOD</div><div class="t" style="left:592px;top:573px">D2393</div>
<div class="a" style="left:465px;top:582px;width:441px;height:1px;background:#777"></div>
<div class="a" style="left:514px;top:516px;width:1px;height:67px;background:#d0d0d0"></div>
<div class="a" style="left:550px;top:516px;width:1px;height:67px;background:#d0d0d0"></div>
<div class="a" style="left:589px;top:516px;width:1px;height:67px;background:#d0d0d0"></div>
<div class="a" style="left:640px;top:516px;width:1px;height:67px;background:#d0d0d0"></div>
<div class="a" style="left:906px;top:516px;width:17px;height:187px;background:#f0f0f0"></div>
<svg class="a" style="left:909px;top:520px" width="11" height="7"><path d="M1 6L5.5 1 10 6z" fill="#b0b0b0"/></svg>
<svg class="a" style="left:909px;top:691px" width="11" height="7"><path d="M1 1L5.5 6 10 1z" fill="#b0b0b0"/></svg>
<div class="t" style="left:932px;top:488px;font-size:10px">Set Priority</div>
<div class="a" style="left:929px;top:500px;width:70px;height:204px;border:1px solid #4a5a80;background:#fff"></div>
<div class="t" style="left:933px;top:503px;font-size:11.5px">No Priority</div>
<div class="t" style="left:933px;top:517px;font-size:11.5px">1</div>
<div class="t" style="left:933px;top:531px;font-size:11.5px">2</div>
<div class="t" style="left:933px;top:545px;font-size:11.5px">3</div>
<div class="t" style="left:933px;top:559px;font-size:11.5px">4</div>
<div class="t" style="left:933px;top:573px;font-size:11.5px">5</div>
<div class="t" style="left:933px;top:587px;font-size:11.5px">6</div>
<div class="t" style="left:933px;top:601px;font-size:11.5px">7</div>
<div class="t" style="left:933px;top:615px;font-size:11.5px">8</div>
<div class="t" style="left:933px;top:629px;font-size:11.5px">Next</div>
<div class="t" style="left:933px;top:643px;font-size:11.5px">Low</div>
<div class="t" style="left:933px;top:657px;font-size:11.5px">Recmend</div>
<div class="t" style="left:933px;top:671px;font-size:11.5px">Wait</div>
<div class="a" style="left:463px;top:706px;width:544px;height:22px;background:#fff"></div>
<div class="a" style="left:0;top:0;width:1007px;height:728px;border:1px solid #8fb0e8;border-top:none;border-radius:8px;z-index:20"></div>
</body></html>
